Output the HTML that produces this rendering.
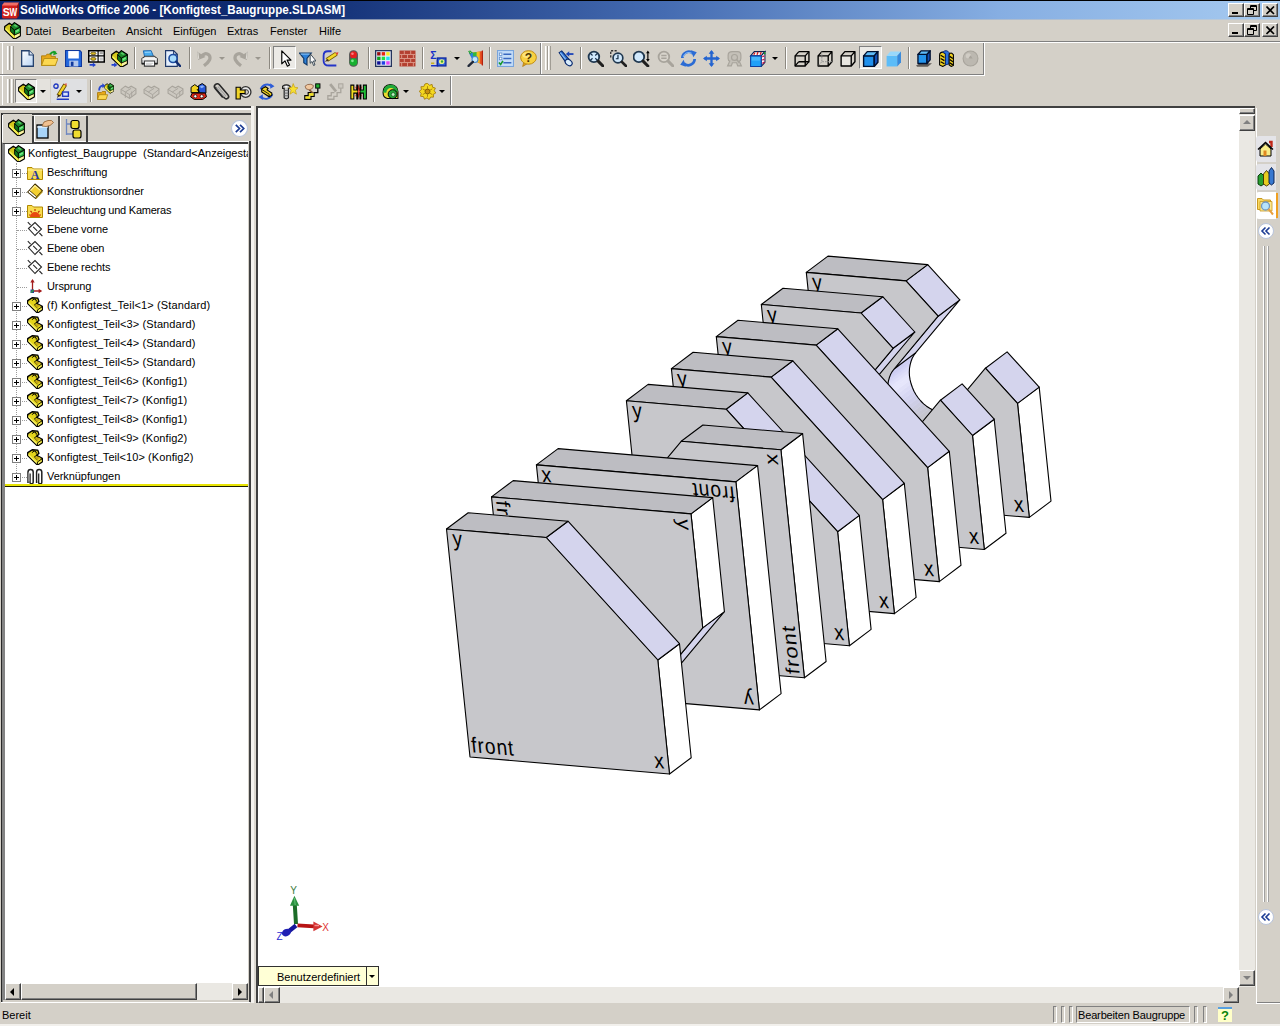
<!DOCTYPE html>
<html lang="de"><head><meta charset="utf-8"><title>SolidWorks Office 2006 - [Konfigtest_Baugruppe.SLDASM]</title>
<style>
html,body{margin:0;padding:0}
body{width:1280px;height:1026px;overflow:hidden;background:#d4d0c8;position:relative;font-family:"Liberation Sans",sans-serif;font-size:11px;color:#000}
.a{position:absolute}
.t{position:absolute;white-space:nowrap;line-height:14px;height:14px}
#title{left:0;top:0;width:1280px;height:19px;background:linear-gradient(90deg,#0a246a 0%,#0e2a70 22%,#456cb2 52%,#86aee2 78%,#a6caf0 100%)}
#title .cap{left:20px;top:2px;color:#fff;font-weight:bold;font-size:12.5px;line-height:16px;height:16px;transform:scaleX(.931);transform-origin:0 0}
.wb{position:absolute;box-sizing:border-box;width:16px;height:14px;background:#d4d0c8;border:1px solid;border-color:#fff #404040 #404040 #fff;box-shadow:inset -1px -1px 0 #808080}
.sep{position:absolute;width:1px;height:22px;background:#8c8880;box-shadow:1px 0 0 #fff}
.grip{position:absolute;width:1px;height:24px;background:#fff;box-shadow:1px 0 0 #e4e2dc,2px 0 0 #a09c94}
.dd{position:absolute;width:0;height:0;border:3px solid transparent;border-top:3px solid #000;border-bottom:0}
.ddg{border-top-color:#9a968e}
.ic{position:absolute;width:18px;height:18px;overflow:visible}
.row{position:absolute;left:0;width:250px;height:19px}
.pm{position:absolute;left:12px;top:5px;width:7px;height:7px;border:1px solid #808080;background:#fff}
.pm:before{content:"";position:absolute;left:1px;top:3px;width:5px;height:1px;background:#000}
.pm:after{content:"";position:absolute;left:3px;top:1px;width:1px;height:5px;background:#000}
.dh{position:absolute;height:1px;border-top:1px dotted #9c9c9c}
.dv{position:absolute;width:1px;border-left:1px dotted #9c9c9c}
.sb{position:absolute;background:#d4d0c8;border:1px solid;border-color:#fff #404040 #404040 #fff;box-shadow:inset -1px -1px 0 #808080;box-sizing:border-box}
.trk{position:absolute;background:#eae8e3}
.lb text{font-family:"Liberation Sans",sans-serif;fill:#000;stroke:none}
</style></head><body>
<!-- title bar -->
<div id="title" class="a"><div class="a" style="left:0;top:0;width:1280px;height:1px;background:#000"></div>
<svg class="a" style="left:2px;top:2px" width="17" height="17" viewBox="0 0 17 17"><rect x="0" y="2" width="15.5" height="14.5" rx="1.5" fill="#d0201c"/><path d="M0 3.5L2 .5H17L15.5 3.5Z" fill="#f07068"/><path d="M15.5 3L17 .5V13.5L15.5 16.5Z" fill="#98120e"/><text x=".8" y="13.6" font-family="Liberation Sans,sans-serif" font-weight="bold" font-size="10.5" fill="#fff">S</text><text x="7.6" y="13.6" font-family="Liberation Sans,sans-serif" font-weight="bold" font-size="10.5" fill="#fff" textLength="7.6" lengthAdjust="spacingAndGlyphs">W</text></svg>
<div class="t cap">SolidWorks Office 2006 - [Konfigtest_Baugruppe.SLDASM]</div>
<div class="wb" style="left:1228px;top:3px"><div class="a" style="left:3px;top:8px;width:6px;height:2px;background:#000"></div></div>
<div class="wb" style="left:1244px;top:3px"><svg class="a" style="left:2px;top:1px" width="10" height="10"><path d="M3.5 3.5V.5H9.5V5.5H6.5M.5 3.5H6.5V9.5H.5Z M.5 4.5H6.5 M3.5 1.5H9.5" stroke="#000" fill="none"/></svg></div>
<div class="wb" style="left:1262px;top:3px"><svg class="a" style="left:3px;top:2px" width="9" height="9"><path d="M.5 .5L8 8M8 .5L.5 8" stroke="#000" stroke-width="1.6" fill="none"/></svg></div>
</div>
<!-- menu bar -->
<div class="a" style="left:0;top:19px;width:1280px;height:1px;background:linear-gradient(90deg,#6f7a99,#bdcddc)"></div>
<div class="a" style="left:0;top:41px;width:1280px;height:1px;background:#808080"></div>
<div class="a" style="left:0;top:42px;width:1280px;height:1px;background:#fff"></div>
<div class="t" style="left:25.5px;top:24px">Datei</div>
<div class="t" style="left:62px;top:24px">Bearbeiten</div>
<div class="t" style="left:126px;top:24px">Ansicht</div>
<div class="t" style="left:173px;top:24px">Einfügen</div>
<div class="t" style="left:227px;top:24px">Extras</div>
<div class="t" style="left:270px;top:24px">Fenster</div>
<div class="t" style="left:319px;top:24px">Hilfe</div>
<div class="wb" style="left:1228px;top:23px"><div class="a" style="left:3px;top:8px;width:6px;height:2px;background:#000"></div></div>
<div class="wb" style="left:1244px;top:23px"><svg class="a" style="left:2px;top:1px" width="10" height="10"><path d="M3.5 3.5V.5H9.5V5.5H6.5M.5 3.5H6.5V9.5H.5Z M.5 4.5H6.5 M3.5 1.5H9.5" stroke="#000" fill="none"/></svg></div>
<div class="wb" style="left:1262px;top:23px"><svg class="a" style="left:3px;top:2px" width="9" height="9"><path d="M.5 .5L8 8M8 .5L.5 8" stroke="#000" stroke-width="1.6" fill="none"/></svg></div>
<!-- toolbar row frames -->
<div class="a" style="left:2px;top:43px;width:1px;height:31px;background:#fff"></div>
<div class="a" style="left:0;top:74px;width:984px;height:1px;background:#808080"></div>
<div class="a" style="left:0;top:75px;width:984px;height:1px;background:#fff"></div>
<div class="a" style="left:540px;top:43px;width:1px;height:31px;background:#808080"></div>
<div class="a" style="left:541px;top:43px;width:1px;height:31px;background:#fff"></div>
<div class="a" style="left:983px;top:43px;width:1px;height:32px;background:#808080"></div>
<div class="a" style="left:984px;top:43px;width:1px;height:33px;background:#fff"></div>
<div class="a" style="left:2px;top:76px;width:1px;height:29px;background:#fff"></div>
<div class="a" style="left:450px;top:76px;width:1px;height:29px;background:#808080"></div>
<div class="a" style="left:451px;top:76px;width:1px;height:29px;background:#fff"></div>
<div class="grip" style="left:7px;top:46px"></div><div class="grip" style="left:11px;top:46px"></div>
<div class="grip" style="left:545px;top:46px"></div><div class="grip" style="left:548px;top:46px"></div>
<div class="grip" style="left:7px;top:79px"></div><div class="grip" style="left:11px;top:79px"></div>
<!-- separators row 1 -->
<div class="sep" style="left:134px;top:47px"></div>
<div class="sep" style="left:189px;top:47px"></div>
<div class="sep" style="left:269px;top:47px"></div>
<div class="sep" style="left:368px;top:47px"></div>
<div class="sep" style="left:422px;top:47px"></div>
<div class="sep" style="left:489px;top:47px"></div>
<div class="sep" style="left:580px;top:47px"></div>
<div class="sep" style="left:785px;top:47px"></div>
<div class="sep" style="left:908px;top:47px"></div>
<!-- separators row 2 -->
<div class="sep" style="left:90px;top:80px"></div>
<div class="sep" style="left:373px;top:80px"></div>
<!-- pressed buttons -->
<div class="a" style="left:273px;top:46px;width:23px;height:23px;box-sizing:border-box;background:#eceae6;border:1px solid;border-color:#808080 #fff #fff #808080"></div>
<div class="a" style="left:859px;top:46px;width:23px;height:23px;box-sizing:border-box;background:#eceae6;border:1px solid;border-color:#808080 #fff #fff #808080"></div>
<div class="a" style="left:15px;top:79px;width:22px;height:24px;box-sizing:border-box;background:#eceae6;border:1px solid;border-color:#808080 #fff #fff #808080"></div>
<div class="a" style="left:37px;top:79px;width:13px;height:24px;box-sizing:border-box;background:#e4e2dd"></div>
<div class="a" style="left:51px;top:79px;width:36px;height:24px;box-sizing:border-box;background:#dfe0e2"></div>
<!-- dropdown arrows -->
<div class="dd ddg" style="left:219px;top:57px"></div>
<div class="dd ddg" style="left:255px;top:57px"></div>
<div class="dd" style="left:454px;top:57px"></div>
<div class="dd" style="left:772px;top:57px"></div>
<div class="dd" style="left:40px;top:90px"></div>
<div class="dd" style="left:76px;top:90px"></div>
<div class="dd" style="left:403px;top:90px"></div>
<div class="dd" style="left:439px;top:90px"></div>
<!-- toolbar icons -->
<svg class="a" style="left:18.5px;top:49.5px" width="17" height="17" viewBox="0 0 16 16"><defs><linearGradient id="pg" x1="0" y1="0" x2="1" y2="1"><stop offset="0" stop-color="#fff"/><stop offset="1" stop-color="#b8d4f4"/></linearGradient></defs><path d="M2.5 .7H9.5L13.5 4.7V15.3H2.5Z" fill="url(#pg)" stroke="#24406c" stroke-width="1.2"/><path d="M9.5 .7V4.7H13.5" fill="#dce8f8" stroke="#24406c" stroke-width="1.1"/></svg>
<svg class="a" style="left:40.5px;top:49.5px" width="17" height="17" viewBox="0 0 16 16"><path d="M.5 5.5H4.5L5.5 4H9.5V6H13.5V14.5H.5Z" fill="#e8a818" stroke="#a87808" stroke-width=".8"/><path d="M.5 14.5L3 8H16L13.5 14.5Z" fill="#fcd850" stroke="#b08810" stroke-width=".8"/><path d="M8.5 4Q11 .5 14 2.5" stroke="#18a028" stroke-width="1.8" fill="none"/><path d="M12 .5L15.5 3.5L11.5 5Z" fill="#18a028"/></svg>
<svg class="a" style="left:64.5px;top:49.5px" width="17" height="17" viewBox="0 0 16 16"><path d="M.5 .5H14L15.5 2V15.5H.5Z" fill="#2468dc" stroke="#10389c"/><rect x="3" y="1" width="10" height="7" fill="#fff"/><rect x="4" y="10" width="8.5" height="5.5" fill="#b4c8ec"/><rect x="5.5" y="11" width="2.5" height="4" fill="#10389c"/></svg>
<svg class="a" style="left:87.5px;top:49.5px" width="17" height="17" viewBox="0 0 16 16"><rect x=".7" y=".7" width="14.6" height="10.6" fill="#fff" stroke="#000" stroke-width="1.4"/><path d="M9.5 .7V11.3M9.5 5.5H15.3M.7 5.5H9.5" stroke="#000" stroke-width="1.1"/><ellipse cx="5" cy="3.2" rx="2.6" ry="1.2" fill="#d8b820" stroke="#403000" stroke-width=".6"/><ellipse cx="5" cy="8.4" rx="2.6" ry="1.4" fill="#d8b820" stroke="#403000" stroke-width=".6"/><rect x="11" y="2" width="3" height="2" fill="#a0a0a0"/><rect x="11" y="7" width="3" height="3" fill="#c8c8c8"/><path d="M1.5 14H5.5" stroke="#2040d0" stroke-width="1.6"/><path d="M4.5 11.8L7.5 14L4.5 16.2Z" fill="#2040d0"/></svg>
<svg class="a" style="left:110.5px;top:49.5px" width="17" height="17" viewBox="0 0 16 16"><path d="M.7 4.2L5 1.2L7.6 2.8L9.8 .7L15.3 4.4V13L9.8 16.2L.7 7.6Z" fill="#d4c81c" stroke="#000" stroke-width="1.3" stroke-linejoin="round"/><path d="M1.2 5.2L9.3 12.8V15.4L1.2 7.4Z" fill="#f6f258"/><path d="M10.3 12.4L14.8 10V12.8L10.3 15.4Z" fill="#faf4a4"/><path d="M6.2 4.3L9.8 7.5V12.3L6.2 8.9Z" fill="#0c741c" stroke="#000" stroke-width=".8"/><path d="M9.8 7.5L15.3 4.8V9.8L9.8 12.3Z" fill="#2cbc44" stroke="#000" stroke-width=".8"/><path d="M6.2 4.3L9.8 .9L15.3 4.6L9.8 7.5Z" fill="#1c8c2c" stroke="#000" stroke-width=".8"/><path d="M11 8.3L14 6.8V8.3L11 9.8Z" fill="#7ce88c"/><path d="M9 3.2L10.5 2.2L13 3.8L11.5 4.8Z" fill="#58c868"/><path d="M.5 14H4" stroke="#2040d0" stroke-width="1.6"/><path d="M3 11.8L6 14L3 16.2Z" fill="#2040d0"/></svg>
<svg class="a" style="left:140.5px;top:49.5px" width="17" height="17" viewBox="0 0 16 16"><path d="M3.5 6.8L2.2 .8L9.5 .6L12 6.5Z" fill="#48acf0" stroke="#1c68b0" stroke-width=".9"/><path d="M3.5 2.2L9.5 2" stroke="#a0d8fc" stroke-width=".9"/><path d="M.8 8.2L3.8 5.8H12.6L15.4 8.2V12.8H.8Z" fill="#e4e4e4" stroke="#383838" stroke-width="1"/><path d="M1.2 8.4H15" stroke="#fff" stroke-width="1"/><path d="M3.2 10.4H12.8V15.2H3.2Z" fill="#fff" stroke="#383838" stroke-width="1"/><path d="M.8 12.8H3.2M12.8 12.8H15.4" stroke="#202020" stroke-width="1.8"/><path d="M4.5 12.5H11.5M4.5 13.8H10" stroke="#b0b0b0" stroke-width=".6"/></svg>
<svg class="a" style="left:163.5px;top:49.5px" width="17" height="17" viewBox="0 0 16 16"><path d="M1.5 .6H9L12.5 4V15.4H1.5Z" fill="#e4eefc" stroke="#203868" stroke-width="1.1"/><path d="M9 .6V4H12.5" fill="none" stroke="#203868" stroke-width=".9"/><circle cx="8.5" cy="8" r="3.8" fill="#a8dcfc" stroke="#1c4ca0" stroke-width="1.5"/><path d="M11.5 11L15.5 15.5" stroke="#102c70" stroke-width="2.2" stroke-linecap="round"/></svg>
<svg class="a" style="left:195.5px;top:49.5px" width="17" height="17" viewBox="0 0 16 16"><path d="M1 1.5L2 9.5L9 6.5Z" fill="#a8a49c"/><path d="M4.5 6.5Q8.5 1.5 12.2 4.8Q15.5 9 7.5 14.8" fill="none" stroke="#a8a49c" stroke-width="3.1"/><path d="M1.8 2.2L2.6 8.6" stroke="#e8e6e0" stroke-width=".8"/></svg>
<svg class="a" style="left:231.5px;top:49.5px" width="17" height="17" viewBox="0 0 16 16"><path d="M15 1.5L14 9.5L7 6.5Z" fill="#a8a49c"/><path d="M11.5 6.5Q7.5 1.5 3.8 4.8Q.5 9 8.5 14.8" fill="none" stroke="#a8a49c" stroke-width="3.1"/><path d="M14.2 2.2L13.4 8.6" stroke="#e8e6e0" stroke-width=".8"/></svg>
<svg class="a" style="left:276.5px;top:49.5px" width="17" height="17" viewBox="0 0 16 16"><path d="M4.5 .8V13L7.5 10.2L9.8 15.2L11.8 14.2L9.5 9.5H13.2Z" fill="#fff" stroke="#000" stroke-width="1.1" stroke-linejoin="round"/></svg>
<svg class="a" style="left:298.5px;top:49.5px" width="17" height="17" viewBox="0 0 16 16"><path d="M.5 3H11.5L7.5 8V14L4.5 12V8Z" fill="#2c80d8" stroke="#103868" stroke-width="1.1"/><path d="M1.5 3.8H10.5" stroke="#90c8f8"/><path d="M10.5 3.5V12.5L12.3 10.8L13.7 14.6L15 14L13.6 10.3H16Z" fill="#fff" stroke="#203040" stroke-width=".8"/></svg>
<svg class="a" style="left:321.5px;top:49.5px" width="17" height="17" viewBox="0 0 16 16"><path d="M9 1.2H5.5Q1.5 1.2 1.5 5.5V10Q1.5 14.6 6.5 14.6H13.5" stroke="#2434c8" stroke-width="1.7" fill="none"/><path d="M4.5 9.5L13.5 3.5" stroke="#705800" stroke-width="4"/><path d="M4.8 9.3L13.2 3.7" stroke="#f4d828" stroke-width="2.4"/><path d="M12.5 2.5L15.5 2L14.5 5Z" fill="#e04030"/><path d="M2.5 11L5.5 8.2L6.5 10Z" fill="#403020"/></svg>
<svg class="a" style="left:344.5px;top:49.5px" width="17" height="17" viewBox="0 0 16 16"><rect x="3.8" y=".3" width="8.4" height="15.4" rx="4" fill="#585858"/><circle cx="8" cy="4.5" r="3.3" fill="#e42020"/><circle cx="7" cy="3.5" r="1.2" fill="#f88080"/><circle cx="8" cy="11.3" r="3.6" fill="#18b030"/><circle cx="7" cy="10.2" r="1.3" fill="#80e890"/></svg>
<svg class="a" style="left:374.5px;top:49.5px" width="17" height="17" viewBox="0 0 16 16"><rect x=".6" y=".6" width="14.8" height="14.8" fill="#e8ecf8" stroke="#24345c" stroke-width="1.2"/><rect x="2" y="2" width="3.2" height="3.2" fill="#981010"/><rect x="6.3" y="2" width="3.2" height="3.2" fill="#e82810"/><rect x="10.6" y="2" width="3.2" height="3.2" fill="#f8f020"/><rect x="2" y="6.3" width="3.2" height="3.2" fill="#10a020"/><rect x="6.3" y="6.3" width="3.2" height="3.2" fill="#20e040"/><rect x="10.6" y="6.3" width="3.2" height="3.2" fill="#20e0f0"/><rect x="2" y="10.6" width="3.2" height="3.2" fill="#101094"/><rect x="6.3" y="10.6" width="3.2" height="3.2" fill="#2040e4"/><rect x="10.6" y="10.6" width="3.2" height="3.2" fill="#e444f4"/></svg>
<svg class="a" style="left:398.5px;top:49.5px" width="17" height="17" viewBox="0 0 16 16"><rect x=".5" y=".5" width="15" height="15" fill="#b44030"/><path d="M.5 4.2H15.5M.5 8H15.5M.5 11.8H15.5M5 .5V4.2M11 .5V4.2M8 4.2V8M2.5 4.2V8M13.5 4.2V8M5 8V11.8M11 8V11.8M8 11.8V15.5M2.5 11.8V15.5M13.5 11.8V15.5" stroke="#dc9888" stroke-width=".9"/></svg>
<svg class="a" style="left:429.5px;top:49.5px" width="17" height="17" viewBox="0 0 16 16"><text x=".2" y="8" font-family="Liberation Sans,sans-serif" font-weight="bold" font-size="10" fill="#1830c8">Σ</text><path d="M1 14.8H7V9" stroke="#1830c8" stroke-width="1.5" fill="none"/><rect x="7" y="7.5" width="8" height="7.5" fill="#3060d8" stroke="#1028a0" stroke-width="1.2"/><ellipse cx="11" cy="11" rx="2.6" ry="2.2" fill="#e8f088"/><circle cx="11.3" cy="10.8" r="1.1" fill="#38a838"/><path d="M1 12.5H4" stroke="#c8b020" stroke-width="1.5"/></svg>
<svg class="a" style="left:466.5px;top:49.5px" width="17" height="17" viewBox="0 0 16 16"><path d="M2 3L14.5 1V14L9 11Z" fill="#e85020"/><path d="M2 3L12 1.3V12.5L8 10.5Z" fill="#f0c020"/><path d="M2 3L9 1.8V10.8L6.5 9Z" fill="#30b840"/><path d="M2 3L5.5 2.4V8.5L4 7Z" fill="#2880e0"/><path d="M14.5 .5V14.5" stroke="#b02010" stroke-width="1.1"/><path d="M1.5 1L3.5 4M2.5 .5L5 3" stroke="#20a030" stroke-width="1"/><circle cx="7.5" cy="9" r="2.8" fill="#c4e8fc" stroke="#4888c8" stroke-width="1"/><path d="M5.5 11.2L1.5 15" stroke="#202838" stroke-width="2.2" stroke-linecap="round"/></svg>
<svg class="a" style="left:496.5px;top:49.5px" width="17" height="17" viewBox="0 0 16 16"><rect x=".5" y=".5" width="15" height="15" fill="#c4dcf8" stroke="#78a4dc"/><path d="M6 4H13.5M6 8H13.5M6 12H13.5" stroke="#3868c0" stroke-width="1.3"/><rect x="2.2" y="2.8" width="2.4" height="2.4" fill="#fff" stroke="#5888c8" stroke-width=".7"/><rect x="2.2" y="6.8" width="2.4" height="2.4" fill="#fff" stroke="#5888c8" stroke-width=".7"/><path d="M1.8 11.8L3.4 13.6L5.6 10.2" stroke="#18982c" stroke-width="1.5" fill="none"/></svg>
<svg class="a" style="left:519.5px;top:49.5px" width="17" height="17" viewBox="0 0 16 16"><path d="M3.5 11.5L2.5 15.5L7 12.8Z" fill="#e0a020" stroke="#b07808" stroke-width=".7"/><ellipse cx="8" cy="7" rx="7.4" ry="6.4" fill="#f8d040" stroke="#c08c10" stroke-width=".9"/><ellipse cx="6.8" cy="4.8" rx="4.6" ry="2.8" fill="#fce888" opacity=".8"/><text x="8" y="11.2" text-anchor="middle" font-family="Liberation Sans,sans-serif" font-weight="bold" font-size="11.5" fill="#4c3400">?</text></svg>
<svg class="a" style="left:556.5px;top:49.5px" width="17" height="17" viewBox="0 0 16 16"><path d="M2 2.5L4.5 .8L12 9.5L8.5 12Z" fill="#2c6cd0" stroke="#0c2c70" stroke-width="1"/><path d="M3 2.5L9.5 10.5" stroke="#88bcf4" stroke-width="1.2"/><ellipse cx="11" cy="11.8" rx="3.6" ry="2.6" transform="rotate(40 11 11.8)" fill="#d8ecfc" stroke="#0c2c70" stroke-width="1.1"/><path d="M15.5 3.8H10.5" stroke="#1c44b8" stroke-width="1.7"/><path d="M11.5 1.2L8.3 3.8L11.5 6.4Z" fill="#1c44b8"/></svg>
<svg class="a" style="left:586.5px;top:49.5px" width="17" height="17" viewBox="0 0 16 16"><circle cx="6.5" cy="6.5" r="5" fill="#d0e8fc" stroke="#203850" stroke-width="1.7"/><path d="M10.5 10.5L15 15" stroke="#202020" stroke-width="2.8" stroke-linecap="round"/><path d="M3.2 3.2L5.2 5.2M9.8 3.2L7.8 5.2M3.2 9.8L5.2 7.8M9.8 9.8L7.8 7.8" stroke="#18304c" stroke-width="1.1" fill="none"/></svg>
<svg class="a" style="left:609.5px;top:49.5px" width="17" height="17" viewBox="0 0 16 16"><path d="M.7 7V.7H7" stroke="#303030" stroke-width="1.2" fill="none" stroke-dasharray="2 1.3"/><g transform="translate(1.5 1.5) scale(.92)"><circle cx="6.5" cy="6.5" r="5" fill="#d0e8fc" stroke="#203850" stroke-width="1.7"/><path d="M10.5 10.5L15 15" stroke="#202020" stroke-width="2.8" stroke-linecap="round"/></g><path d="M7.5 4.5V8.2H5.5" stroke="#102840" stroke-width="1.1" fill="none"/></svg>
<svg class="a" style="left:632.5px;top:49.5px" width="17" height="17" viewBox="0 0 16 16"><g transform="translate(-1 0)"><circle cx="6.5" cy="6.5" r="5" fill="#d0e8fc" stroke="#203850" stroke-width="1.7"/><path d="M10.5 10.5L15 15" stroke="#202020" stroke-width="2.8" stroke-linecap="round"/></g><path d="M14 2V9.5" stroke="#000" stroke-width="1.1"/><path d="M12.3 3L14 .5L15.7 3ZM12.3 8.5L14 11L15.7 8.5Z" fill="#000"/></svg>
<svg class="a" style="left:656.5px;top:49.5px" width="17" height="17" viewBox="0 0 16 16"><circle cx="6.5" cy="6.5" r="5" fill="#d8d4cc" stroke="#a8a49c" stroke-width="1.7"/><path d="M10.5 10.5L15 15" stroke="#a8a49c" stroke-width="2.8" stroke-linecap="round"/><path d="M4 5.2H9M4 7.8H9" stroke="#a8a49c" stroke-width="1.3"/></svg>
<svg class="a" style="left:679.5px;top:49.5px" width="17" height="17" viewBox="0 0 16 16"><path d="M2.2 7.5A6 6 0 0 1 12.5 3.5" fill="none" stroke="#2c6cd4" stroke-width="2.6"/><path d="M10.5 .3L15.8 2.2L12.5 6.8Z" fill="#2c6cd4"/><path d="M13.8 8.5A6 6 0 0 1 3.5 12.5" fill="none" stroke="#2c6cd4" stroke-width="2.6"/><path d="M5.5 15.7L.2 13.8L3.5 9.2Z" fill="#2c6cd4"/><path d="M3 6.5A5.5 5.5 0 0 1 11 3" fill="none" stroke="#8cc0f8" stroke-width=".9"/></svg>
<svg class="a" style="left:702.5px;top:49.5px" width="17" height="17" viewBox="0 0 16 16"><path d="M8 1.5V14.5M1.5 8H14.5" stroke="#2464d0" stroke-width="2.2"/><path d="M5.3 3.6L8 0L10.7 3.6ZM5.3 12.4L8 16L10.7 12.4ZM3.6 5.3L0 8L3.6 10.7ZM12.4 5.3L16 8L12.4 10.7Z" fill="#2464d0"/></svg>
<svg class="a" style="left:725.5px;top:49.5px" width="17" height="17" viewBox="0 0 16 16"><path d="M2 5Q2 1.5 6 1.5H11Q14 1.5 14 5V8Q14 10 12.5 10.5L14.5 15H11L10 12H6L5 15H1.5L3.5 10.5Q2 10 2 8Z" fill="#c4c0b8" stroke="#a8a49c" stroke-width="1.1"/><circle cx="8" cy="7" r="2.8" fill="none" stroke="#a8a49c" stroke-width="1.1"/><path d="M10 9L12.5 12" stroke="#a8a49c" stroke-width="1.3"/></svg>
<svg class="a" style="left:748.5px;top:49.5px" width="17" height="17" viewBox="0 0 16 16"><path d="M1.5 5.5L5 1.5H15L11.5 5.5Z" fill="#fff" stroke="#102050" stroke-width="1"/><path d="M11.5 5.5L15 1.5V11.5L11.5 15.5Z" fill="#fff" stroke="#102050" stroke-width="1"/><path d="M5.5 2.5L4.5 4.5M8.5 2L7.5 4.5M11.5 2L10.5 4.5" stroke="#d82020" stroke-width="1.3"/><path d="M12.5 6.5L14.5 5.5M12.5 9.5L14.5 8.5M12.5 12.5L14.5 11.5" stroke="#d02050" stroke-width="1.3"/><path d="M14.5 2L15 4" stroke="#18a028" stroke-width="1.3"/><path d="M1.5 5.5H11.5V15.5H1.5Z" fill="#20a0f8" stroke="#1040a0" stroke-width="1"/><path d="M2.5 6.5H10.5V10H2.5Z" fill="#58c0fc" opacity=".7"/></svg>
<svg class="a" style="left:792.5px;top:49.5px" width="17" height="17" viewBox="0 0 16 16"><path d="M2 5.5H11.5V15H2Z M5.5 1.5H15V11H5.5" fill="none" stroke="#000" stroke-width="1.3" stroke-linejoin="round"/><path d="M2 5.5L5.5 1.5M11.5 5.5L15 1.5M11.5 15L15 11M2 15L5.5 11" stroke="#000" stroke-width="1.2"/></svg>
<svg class="a" style="left:815.5px;top:49.5px" width="17" height="17" viewBox="0 0 16 16"><path d="M2 5.5H11.5V15H2Z" fill="none" stroke="#000" stroke-width="1.3" stroke-linejoin="round"/><path d="M2 5.5L5.5 1.5H15V11L11.5 15M11.5 5.5L15 1.5" fill="none" stroke="#000" stroke-width="1.3" stroke-linejoin="round"/><path d="M5.5 1.5V11H15M5.5 11L2 15" stroke="#909090" stroke-width=".9" stroke-dasharray="1.5 1" fill="none"/></svg>
<svg class="a" style="left:838.5px;top:49.5px" width="17" height="17" viewBox="0 0 16 16"><path d="M2 5.5H11.5V15H2Z" fill="#e8e6e0" stroke="#000" stroke-width="1.3" stroke-linejoin="round"/><path d="M2 5.5L5.5 1.5H15V11L11.5 15M11.5 5.5L15 1.5" fill="none" stroke="#000" stroke-width="1.3" stroke-linejoin="round"/></svg>
<svg class="a" style="left:861.5px;top:49.5px" width="17" height="17" viewBox="0 0 16 16"><path d="M1.5 5.5H11.5V15.5H1.5Z" fill="#2090ec" stroke="#001030" stroke-width="1.3" stroke-linejoin="round"/><path d="M1.5 5.5L5 1.5H15L11.5 5.5Z" fill="#60bcf8" stroke="#001030" stroke-width="1.3" stroke-linejoin="round"/><path d="M11.5 5.5L15 1.5V11.5L11.5 15.5Z" fill="#1450b4" stroke="#001030" stroke-width="1.3" stroke-linejoin="round"/></svg>
<svg class="a" style="left:884.5px;top:49.5px" width="17" height="17" viewBox="0 0 16 16"><path d="M1.5 5.5H11.5V15.5H1.5Z" fill="#5cbcf8"/><path d="M1.5 5.5L5 1.5H15L11.5 5.5Z" fill="#98d8fc"/><path d="M11.5 5.5L15 1.5V11.5L11.5 15.5Z" fill="#3488dc"/></svg>
<svg class="a" style="left:914.5px;top:49.5px" width="17" height="17" viewBox="0 0 16 16"><path d="M1 14.5L5 12.5H16L12 15.8H2Z" fill="#605c58"/><g transform="translate(1.5 -.5) scale(.85)"><path d="M1.5 5.5H11.5V15.5H1.5Z" fill="#2494ec" stroke="#001030" stroke-width="1.5" stroke-linejoin="round"/><path d="M1.5 5.5L5 1.5H15L11.5 5.5Z" fill="#60bcf8" stroke="#001030" stroke-width="1.5" stroke-linejoin="round"/><path d="M11.5 5.5L15 1.5V11.5L11.5 15.5Z" fill="#1450b4" stroke="#001030" stroke-width="1.5" stroke-linejoin="round"/></g></svg>
<svg class="a" style="left:937.5px;top:49.5px" width="17" height="17" viewBox="0 0 16 16"><path d="M1.5 5Q1.5 2 4.5 2L7 3.5V14L4.5 15.5L1.5 14Z" fill="#f0d020" stroke="#000" stroke-width="1"/><path d="M2.5 5L6 7M2.5 8L6 10M2.5 11L6 13" stroke="#000" stroke-width="1.2"/><path d="M4.5 2Q8 -1 10.5 2.5V13L7 14V3.5Z" fill="#2c70dc" stroke="#0c2870" stroke-width=".9"/><path d="M10.5 5Q10.5 2.5 13 3L14.5 4.5V14.5L12.5 15.5L10.5 14Z" fill="#f0d020" stroke="#000" stroke-width="1"/><path d="M11 6L14 8M11 9L14 11M11 12L14 14" stroke="#000" stroke-width="1.2"/></svg>
<svg class="a" style="left:961.5px;top:49.5px" width="17" height="17" viewBox="0 0 16 16"><circle cx="8" cy="8" r="7" fill="#bcb8b0" stroke="#a8a49c"/><circle cx="6" cy="5.5" r="2.5" fill="#d0ccc4"/><path d="M8 5L10 8H6Z" fill="#a8a49c"/></svg>
<svg class="a" style="left:17.5px;top:82.5px" width="17" height="17" viewBox="0 0 16 16"><path d="M.7 4.2L5 1.2L7.6 2.8L9.8 .7L15.3 4.4V13L9.8 16.2L.7 7.6Z" fill="#d4c81c" stroke="#000" stroke-width="1.3" stroke-linejoin="round"/><path d="M1.2 5.2L9.3 12.8V15.4L1.2 7.4Z" fill="#f6f258"/><path d="M10.3 12.4L14.8 10V12.8L10.3 15.4Z" fill="#faf4a4"/><path d="M6.2 4.3L9.8 7.5V12.3L6.2 8.9Z" fill="#0c741c" stroke="#000" stroke-width=".8"/><path d="M9.8 7.5L15.3 4.8V9.8L9.8 12.3Z" fill="#2cbc44" stroke="#000" stroke-width=".8"/><path d="M6.2 4.3L9.8 .9L15.3 4.6L9.8 7.5Z" fill="#1c8c2c" stroke="#000" stroke-width=".8"/><path d="M11 8.3L14 6.8V8.3L11 9.8Z" fill="#7ce88c"/><path d="M9 3.2L10.5 2.2L13 3.8L11.5 4.8Z" fill="#58c868"/></svg>
<svg class="a" style="left:52.5px;top:82.5px" width="17" height="17" viewBox="0 0 16 16"><circle cx="2.8" cy="3" r="2" fill="none" stroke="#2038c0" stroke-width="1.3"/><path d="M5 12L11.5 1.5" stroke="#604800" stroke-width="3.8"/><path d="M5.3 11.5L11.2 2" stroke="#f4d428" stroke-width="2.2"/><path d="M10.5 1L12.8 .3L12.8 2.8Z" fill="#e05040"/><path d="M3.8 14L5 10.5L6.8 11.8Z" fill="#302010"/><rect x="9" y="8.5" width="5.5" height="4" fill="#d8e4fc" stroke="#2038c0" stroke-width="1.3"/><path d="M3.5 15.3H15" stroke="#2038c0" stroke-width="1.4"/></svg>
<svg class="a" style="left:96.5px;top:82.5px" width="17" height="17" viewBox="0 0 16 16"><path d="M.5 9H4L5 8H8V15.5H.5Z" fill="#e8a818" stroke="#a87808" stroke-width=".8"/><path d="M.5 15.5L2 11H10L8.5 15.5Z" fill="#fcd850" stroke="#b08810" stroke-width=".8"/><g transform="translate(6.5 0) scale(.6)"><path d="M.7 4.2L5 1.2L7.6 2.8L9.8 .7L15.3 4.4V13L9.8 16.2L.7 7.6Z" fill="#d4c81c" stroke="#000" stroke-width="1.3" stroke-linejoin="round"/><path d="M1.2 5.2L9.3 12.8V15.4L1.2 7.4Z" fill="#f6f258"/><path d="M10.3 12.4L14.8 10V12.8L10.3 15.4Z" fill="#faf4a4"/><path d="M6.2 4.3L9.8 7.5V12.3L6.2 8.9Z" fill="#0c741c" stroke="#000" stroke-width=".8"/><path d="M9.8 7.5L15.3 4.8V9.8L9.8 12.3Z" fill="#2cbc44" stroke="#000" stroke-width=".8"/><path d="M6.2 4.3L9.8 .9L15.3 4.6L9.8 7.5Z" fill="#1c8c2c" stroke="#000" stroke-width=".8"/><path d="M11 8.3L14 6.8V8.3L11 9.8Z" fill="#7ce88c"/><path d="M9 3.2L10.5 2.2L13 3.8L11.5 4.8Z" fill="#58c868"/></g><path d="M2 7Q2 2.5 6 2.5" stroke="#2848d0" stroke-width="1.7" fill="none"/><path d="M5 .3L8 2.5L5 4.7Z" fill="#2848d0"/></svg>
<svg class="a" style="left:119.5px;top:82.5px" width="17" height="17" viewBox="0 0 16 16"><path d="M1 6L5 3L8 4.5L10.5 3L15 5.5V10L9 14.5L1 9.5Z" fill="#ccc8c0" stroke="#a8a49c" stroke-width="1"/><path d="M1 6L9 11V14.5M9 11L15 6M5 8.5L10.5 5" fill="none" stroke="#a8a49c" stroke-width=".9"/><path d="M5 9L5 14M11 8V13" stroke="#a8a49c" stroke-width=".9"/></svg>
<svg class="a" style="left:142.5px;top:82.5px" width="17" height="17" viewBox="0 0 16 16"><path d="M1 6L5 3L8 4.5L10.5 3L15 5.5V10L9 14.5L1 9.5Z" fill="#ccc8c0" stroke="#a8a49c" stroke-width="1"/><path d="M1 6L9 11V14.5M9 11L15 6M5 8.5L10.5 5" fill="none" stroke="#a8a49c" stroke-width=".9"/></svg>
<svg class="a" style="left:166.5px;top:82.5px" width="17" height="17" viewBox="0 0 16 16"><path d="M1 6L5 3L8 4.5L10.5 3L15 5.5V10L9 14.5L1 9.5Z" fill="#ccc8c0" stroke="#a8a49c" stroke-width="1"/><path d="M1 6L9 11V14.5M9 11L15 6M5 8.5L10.5 5" fill="none" stroke="#a8a49c" stroke-width=".9"/><path d="M12 7.5V12" stroke="#a8a49c" stroke-width=".9"/></svg>
<svg class="a" style="left:189.5px;top:82.5px" width="17" height="17" viewBox="0 0 16 16"><path d="M1 4L4.5 1.5L8 4V9L1 9Z" fill="#f0d020" stroke="#000" stroke-width=".9"/><path d="M8 2.5L11.5 .5L15 3V9.5L8 9Z" fill="#2858d8" stroke="#000" stroke-width=".9"/><path d="M9 3.5L11.5 2L13.5 3.5L11 5Z" fill="#88b0f8"/><path d="M2 9.5H14.5L15.5 13L12 15.5H4L.5 13Z" fill="#e02818" stroke="#000" stroke-width=".9"/><circle cx="5" cy="12.5" r="1.5" fill="#fff" stroke="#000" stroke-width=".6"/><circle cx="11" cy="12.5" r="1.5" fill="#fff" stroke="#000" stroke-width=".6"/><path d="M6.5 6L9 8" stroke="#000"/></svg>
<svg class="a" style="left:212.5px;top:82.5px" width="17" height="17" viewBox="0 0 16 16"><path d="M2.2 3.8L10.8 14A2.1 2.1 0 0 0 14.2 11.4L6.2 1.8A2.7 2.7 0 0 0 2 5.2L9.2 13.6" fill="none" stroke="#282828" stroke-width="1.5"/><path d="M4.6 3.4L12.4 12.6" stroke="#a0a0a0" stroke-width="1.1"/><path d="M3 4.2L10.4 13" stroke="#e8e8e8" stroke-width=".7"/></svg>
<svg class="a" style="left:234.5px;top:82.5px" width="17" height="17" viewBox="0 0 16 16"><circle cx="10" cy="8.5" r="5" fill="#e8e8e8" stroke="#303030" stroke-width="1.2"/><circle cx="10.5" cy="8.5" r="2.2" fill="#d4d0c8" stroke="#303030" stroke-width=".9"/><path d="M1 4H5V6.5H9.5V10H5V15H1Z" fill="#f0d428" stroke="#000" stroke-width="1"/></svg>
<svg class="a" style="left:257.5px;top:82.5px" width="17" height="17" viewBox="0 0 16 16"><path d="M2.5 6A6.5 6.5 0 0 1 13 3" fill="none" stroke="#2c5cd8" stroke-width="1.8"/><path d="M11.5 .3L15.5 3L11.5 5.5Z" fill="#2c5cd8"/><path d="M13.5 10.5A6.5 6.5 0 0 1 3 13.2" fill="none" stroke="#2c5cd8" stroke-width="1.8"/><path d="M4.5 16L.5 13.2L4.5 10.7Z" fill="#2c5cd8"/><path d="M3.5 5.5L7 3.5L9.5 5L8.5 6.5L13 9.5V11.5L10.5 13L3.5 8.5Z" fill="#f0d428" stroke="#000" stroke-width="1"/><path d="M3.5 6L10.5 10.5V13" fill="none" stroke="#000" stroke-width=".8"/></svg>
<svg class="a" style="left:280.5px;top:82.5px" width="17" height="17" viewBox="0 0 16 16"><path d="M1.5 3Q5 .5 8.5 3V5H7V14Q5 15.8 3 14V5H1.5Z" fill="#c8c8c8" stroke="#202020" stroke-width="1.1"/><path d="M3 7H7M3 9.5H7M3 12H7" stroke="#606060" stroke-width=".8"/><path d="M4 3.5H6" stroke="#fff" stroke-width="1.4"/><path d="M11.5 .5L12.8 4L16 4.5L13.5 6.8L14.5 10.5L11.5 8.5L8.5 10.5L9.5 6.8L7.5 4.5L10.3 4Z" fill="#f8e030" stroke="#c09810" stroke-width=".6"/></svg>
<svg class="a" style="left:303.5px;top:82.5px" width="17" height="17" viewBox="0 0 16 16"><path d="M1 3Q3 .8 6.5 1.2L9 2.5L8 5L5 6.5L2 5.5Z" fill="#f0c8a0" stroke="#805030" stroke-width=".7"/><path d="M5 6.5L8.5 9.5" stroke="#805030" stroke-width="1.4"/><rect x="11" y=".8" width="4" height="4" fill="#20b030" stroke="#000" stroke-width=".9"/><path d="M13 5V9H9.5V12.5H6.5V15.3H.8V12H4V9H7" fill="none" stroke="#000" stroke-width="1.2"/><path d="M1.3 12.6H6V14.8H1.3Z" fill="#f0e020"/><path d="M4.5 9.6H9V12H4.5Z" fill="#f0e020"/></svg>
<svg class="a" style="left:326.5px;top:82.5px" width="17" height="17" viewBox="0 0 16 16"><path d="M3 1L8.5 8" stroke="#a8a49c" stroke-width="2.6"/><rect x="11" y=".8" width="4" height="4" fill="#ccc8c0" stroke="#a8a49c" stroke-width=".9"/><path d="M13 5V9H9.5V12.5H6.5V15.3H.8V12H4V9H7" fill="none" stroke="#a8a49c" stroke-width="1.2"/></svg>
<svg class="a" style="left:349.5px;top:82.5px" width="17" height="17" viewBox="0 0 16 16"><path d="M8 1.5L9 5L11.5 3L10 6.5L13 8L10 9.5L11.5 13L9 11L8 14.5L7 11L4.5 13L6 9.5L3 8L6 6.5L4.5 3L7 5Z" fill="#f83828"/><path d="M.8 2H3.6V6.5H6.4V2H7.4V15H6.4V9.5H3.6V15H.8Z" fill="#f0dc20" stroke="#000" stroke-width="1"/><path d="M9.4 2H10.2V6.5H12.6V2H15.4V15H12.6V9.5H10.2V15H9.4Z" fill="#20c038" stroke="#000" stroke-width="1"/><path d="M8.3 5.5L8.6 7.2L9.8 7.6L8.6 8.4L8.3 10.5L7.8 8.4L6.8 7.8L7.8 7.2Z" fill="#ff6050"/></svg>
<svg class="a" style="left:381.5px;top:82.5px" width="17" height="17" viewBox="0 0 16 16"><path d="M1 9Q1 2 8 1.5Q14.5 2 15 8V14.5H5Q1 14 1 9Z" fill="#e8dc30" stroke="#000" stroke-width="1"/><path d="M2.5 9Q3 3.5 8.5 3Q13 3.5 13.5 8.5" fill="none" stroke="#20a838" stroke-width="3"/><circle cx="10" cy="10.5" r="4.2" fill="#20a838" stroke="#000" stroke-width=".9"/><circle cx="10.5" cy="10.8" r="1.8" fill="#b8f0c0" stroke="#105018" stroke-width=".7"/></svg>
<svg class="a" style="left:418.5px;top:82.5px" width="17" height="17" viewBox="0 0 16 16"><path d="M8 .3L9.8 2.2L12.3 1.3L12.8 4L15.4 4.8L14.3 7.2L15.8 9.4L13.5 10.6L13.6 13.3L11 13.2L9.6 15.6L7.5 14L5.2 15.3L4.2 12.8L1.5 12.5L2 9.8L.2 7.8L2.3 6.2L1.8 3.5L4.5 3.4L5.6 .9Z" fill="#f4d820" stroke="#a07808" stroke-width=".8"/><circle cx="8" cy="8" r="2.3" fill="#c89010" stroke="#705000" stroke-width=".8"/><path d="M8 3V5.5M3.5 5.5L6 7M3.5 11L6 9.2M8 13V10.5M12.5 11L10 9.2M12.5 5.5L10 7" stroke="#a07808" stroke-width=".8"/></svg>
<svg class="a" style="left:4px;top:22px" width="17" height="17" viewBox="0 0 16 16"><path d="M.7 4.2L5 1.2L7.6 2.8L9.8 .7L15.3 4.4V13L9.8 16.2L.7 7.6Z" fill="#d4c81c" stroke="#000" stroke-width="1.3" stroke-linejoin="round"/><path d="M1.2 5.2L9.3 12.8V15.4L1.2 7.4Z" fill="#f6f258"/><path d="M10.3 12.4L14.8 10V12.8L10.3 15.4Z" fill="#faf4a4"/><path d="M6.2 4.3L9.8 7.5V12.3L6.2 8.9Z" fill="#0c741c" stroke="#000" stroke-width=".8"/><path d="M9.8 7.5L15.3 4.8V9.8L9.8 12.3Z" fill="#2cbc44" stroke="#000" stroke-width=".8"/><path d="M6.2 4.3L9.8 .9L15.3 4.6L9.8 7.5Z" fill="#1c8c2c" stroke="#000" stroke-width=".8"/><path d="M11 8.3L14 6.8V8.3L11 9.8Z" fill="#7ce88c"/><path d="M9 3.2L10.5 2.2L13 3.8L11.5 4.8Z" fill="#58c868"/></svg>
<!-- viewport frame -->
<div class="a" style="left:0;top:106px;width:1255px;height:2px;background:#404040"></div>
<div class="a" style="left:0;top:108px;width:252px;height:2px;background:#fff"></div>
<div class="a" style="left:256px;top:106px;width:2px;height:897px;background:#404040"></div>
<div class="a" style="left:258px;top:108px;width:981px;height:879px;background:#fff"></div>
<div class="a" style="left:1255px;top:106px;width:25px;height:898px;background:#d4d0c8"></div>
<div class="a" style="left:1256px;top:108px;width:1px;height:895px;background:#fff"></div><div class="a" style="left:1257px;top:1002px;width:23px;height:1px;background:#808080"></div><div class="a" style="left:1256px;top:1003px;width:24px;height:1px;background:#fff"></div>
<!-- left panel -->
<div class="a" style="left:1px;top:113px;width:250px;height:2px;background:#404040"></div>
<div class="a" style="left:1px;top:113px;width:1px;height:889px;background:#282828"></div><div class="a" style="left:2px;top:115px;width:1px;height:27px;background:#fff"></div>
<div class="a" style="left:249px;top:141px;width:2px;height:861px;background:#404040"></div><div class="a" style="left:251px;top:106px;width:3px;height:897px;background:#f4f2ee"></div><div class="a" style="left:254px;top:106px;width:2px;height:897px;background:#dcd8d0"></div>
<div class="a" style="left:3px;top:143px;width:245px;height:840px;background:#fff"></div>
<div class="a" style="left:2px;top:143px;width:3px;height:859px;background:#848484"></div>
<div class="a" style="left:3px;top:141px;width:246px;height:1px;background:#fff"></div><div class="a" style="left:3px;top:142px;width:245px;height:1.5px;background:#404040"></div>
<!-- tabs -->
<div class="a" style="left:3px;top:114px;width:29px;height:29px;background:#d8d4cc"></div>
<div class="a" style="left:32px;top:116px;width:2px;height:26px;background:#404040"></div>
<div class="a" style="left:34px;top:116px;width:1px;height:26px;background:#fff"></div>
<div class="a" style="left:58px;top:116px;width:2px;height:26px;background:#404040"></div>
<div class="a" style="left:60px;top:116px;width:1px;height:26px;background:#fff"></div>
<div class="a" style="left:86px;top:116px;width:2px;height:26px;background:#404040"></div>
<div class="a" style="left:34px;top:115px;width:52px;height:1px;background:#fff"></div>
<!-- chevron button -->
<svg class="a" style="left:231px;top:120px" width="17" height="17" viewBox="0 0 16 16"><circle cx="8" cy="8" r="7.5" fill="#fff" stroke="#b8c4dc"/><path d="M4.5 4.5L8 8L4.5 11.5M8.5 4.5L12 8L8.5 11.5" fill="none" stroke="#1c3c94" stroke-width="1.6"/></svg>
<!-- yellow line -->
<div class="a" style="left:5px;top:484px;width:243px;height:2px;background:#e8e404"></div>
<div class="a" style="left:5px;top:486px;width:243px;height:1px;background:#202000"></div>
<!-- left hscroll -->
<div class="trk" style="left:5px;top:983px;width:243px;height:17px"></div>
<div class="sb" style="left:5px;top:983px;width:16px;height:17px"><div class="a" style="left:4px;top:4px;width:0;height:0;border:4px solid transparent;border-right:4px solid #000;border-left:0"></div></div>
<div class="sb" style="left:21px;top:983px;width:176px;height:17px"></div>
<div class="sb" style="left:232px;top:983px;width:16px;height:17px"><div class="a" style="left:5px;top:4px;width:0;height:0;border:4px solid transparent;border-left:4px solid #000;border-right:0"></div></div>
<div class="a" style="left:3px;top:1000px;width:246px;height:2px;background:#d4d0c8"></div>
<div class="a" style="left:1px;top:1002px;width:249px;height:1px;background:#fff"></div>
<!-- viewport scrollbars -->
<div class="trk" style="left:1239px;top:108px;width:16px;height:879px"></div>
<div class="sb" style="left:1239px;top:108px;width:16px;height:6px"></div>
<div class="sb" style="left:1239px;top:115px;width:16px;height:16px"><div class="a" style="left:3px;top:4px;width:0;height:0;border:4px solid transparent;border-bottom:4px solid #808080;border-top:0"></div></div>
<div class="sb" style="left:1239px;top:970px;width:16px;height:16px"><div class="a" style="left:3px;top:5px;width:0;height:0;border:4px solid transparent;border-top:4px solid #808080;border-bottom:0"></div></div>
<div class="trk" style="left:258px;top:987px;width:981px;height:16px"></div>
<div class="sb" style="left:258px;top:987px;width:6px;height:16px"></div>
<div class="sb" style="left:264px;top:987px;width:16px;height:16px"><div class="a" style="left:4px;top:3px;width:0;height:0;border:4px solid transparent;border-right:4px solid #808080;border-left:0"></div></div>
<div class="sb" style="left:1223px;top:987px;width:16px;height:16px"><div class="a" style="left:5px;top:3px;width:0;height:0;border:4px solid transparent;border-left:4px solid #808080;border-right:0"></div></div>
<div class="a" style="left:1239px;top:987px;width:17px;height:17px;background:#d4d0c8"></div>
<!-- view label -->
<div class="a" style="left:258px;top:966px;width:121px;height:20px;background:#ffffd6;border:1px solid #303030;box-sizing:border-box"></div>
<div class="a" style="left:366px;top:967px;width:1px;height:18px;background:#303030"></div>
<div class="t" style="left:277px;top:970px">Benutzerdefiniert</div>
<div class="dd" style="left:369px;top:975px"></div>
<!-- status bar -->
<div class="a" style="left:0;top:1004px;width:1280px;height:22px;background:#d4d0c8"></div>
<div class="t" style="left:2px;top:1008px">Bereit</div>
<div class="a" style="left:1076px;top:1006px;width:114px;height:17px;box-sizing:border-box;border:1px solid;border-color:#808080 #fff #fff #808080"></div>
<div class="t" style="left:1078px;top:1008px;letter-spacing:-0.15px">Bearbeiten Baugruppe</div>
<div class="a" style="left:1053px;top:1006px;width:4px;height:17px;box-sizing:border-box;border:1px solid;border-color:#808080 #fff #fff #808080"></div>
<div class="a" style="left:1061px;top:1006px;width:4px;height:17px;box-sizing:border-box;border:1px solid;border-color:#808080 #fff #fff #808080"></div>
<div class="a" style="left:1069px;top:1006px;width:4px;height:17px;box-sizing:border-box;border:1px solid;border-color:#808080 #fff #fff #808080"></div>
<div class="a" style="left:1194px;top:1006px;width:4px;height:17px;box-sizing:border-box;border:1px solid;border-color:#808080 #fff #fff #808080"></div>
<div class="a" style="left:1203px;top:1006px;width:4px;height:17px;box-sizing:border-box;border:1px solid;border-color:#808080 #fff #fff #808080"></div>
<svg class="a" style="left:1218px;top:1007px" width="14" height="15" viewBox="0 0 14 15"><rect x="0" y="0" width="14" height="15" fill="#ffffc8"/><rect x="0" y="0" width="14" height="2" fill="#58a0e0"/><text x="7" y="13" text-anchor="middle" font-family="Liberation Sans,sans-serif" font-weight="bold" font-size="13" fill="#088408">?</text></svg>
<div class="a" style="left:0;top:1024px;width:1280px;height:2px;background:#f2f0ec"></div>
<svg class="a" style="left:8px;top:119px" width="17" height="17" viewBox="0 0 16 16"><path d="M.7 4.2L5 1.2L7.6 2.8L9.8 .7L15.3 4.4V13L9.8 16.2L.7 7.6Z" fill="#d4c81c" stroke="#000" stroke-width="1.3" stroke-linejoin="round"/><path d="M1.2 5.2L9.3 12.8V15.4L1.2 7.4Z" fill="#f6f258"/><path d="M10.3 12.4L14.8 10V12.8L10.3 15.4Z" fill="#faf4a4"/><path d="M6.2 4.3L9.8 7.5V12.3L6.2 8.9Z" fill="#0c741c" stroke="#000" stroke-width=".8"/><path d="M9.8 7.5L15.3 4.8V9.8L9.8 12.3Z" fill="#2cbc44" stroke="#000" stroke-width=".8"/><path d="M6.2 4.3L9.8 .9L15.3 4.6L9.8 7.5Z" fill="#1c8c2c" stroke="#000" stroke-width=".8"/><path d="M11 8.3L14 6.8V8.3L11 9.8Z" fill="#7ce88c"/><path d="M9 3.2L10.5 2.2L13 3.8L11.5 4.8Z" fill="#58c868"/></svg>
<svg class="a" style="left:36px;top:118px" width="20" height="22" viewBox="0 0 20 22"><rect x="1" y="7" width="11" height="13" fill="#a8d4f8" stroke="#000" stroke-width="1.3"/><path d="M1 9H12" stroke="#fff" stroke-width="1"/><path d="M6 8L8 4L12 2.5H15.5L17.5 4.5L14 7.5L10 8.5Z" fill="#f0c090" stroke="#906030" stroke-width=".8"/></svg>
<svg class="a" style="left:63px;top:118px" width="22" height="22" viewBox="0 0 22 22"><path d="M3.5 1V17M3.5 6H8M3.5 16H10" stroke="#7088c0" stroke-width="1.3" fill="none"/><rect x="8" y="2.5" width="8" height="8" rx="2" fill="#f0dc30" stroke="#000" stroke-width="1.2"/><rect x="10" y="12" width="8" height="8" rx="2" fill="#f0dc30" stroke="#000" stroke-width="1.2"/></svg>
<!-- feature tree -->
<div class="dv" style="left:16px;top:163px;height:316px"></div>
<svg class="a" style="left:8px;top:145px" width="17" height="17" viewBox="0 0 16 16"><path d="M.7 4.2L5 1.2L7.6 2.8L9.8 .7L15.3 4.4V13L9.8 16.2L.7 7.6Z" fill="#d4c81c" stroke="#000" stroke-width="1.3" stroke-linejoin="round"/><path d="M1.2 5.2L9.3 12.8V15.4L1.2 7.4Z" fill="#f6f258"/><path d="M10.3 12.4L14.8 10V12.8L10.3 15.4Z" fill="#faf4a4"/><path d="M6.2 4.3L9.8 7.5V12.3L6.2 8.9Z" fill="#0c741c" stroke="#000" stroke-width=".8"/><path d="M9.8 7.5L15.3 4.8V9.8L9.8 12.3Z" fill="#2cbc44" stroke="#000" stroke-width=".8"/><path d="M6.2 4.3L9.8 .9L15.3 4.6L9.8 7.5Z" fill="#1c8c2c" stroke="#000" stroke-width=".8"/><path d="M11 8.3L14 6.8V8.3L11 9.8Z" fill="#7ce88c"/><path d="M9 3.2L10.5 2.2L13 3.8L11.5 4.8Z" fill="#58c868"/></svg>
<div class="t" style="left:28px;top:146px;width:220px;overflow:hidden">Konfigtest_Baugruppe&nbsp; (Standard&lt;Anzeigesta</div>
<div class="dh" style="left:17px;top:173px;width:10px"></div>
<div class="pm" style="top:169px"></div>
<svg class="a" style="left:27px;top:164px" width="16" height="16" viewBox="0 0 16 16"><path d="M.5 3.5H5L6.5 5H15.5V15.5H.5Z" fill="#f8dc50" stroke="#b08800"/><path d="M.5 6H15.5" stroke="#fff0a0"/><text x="8" y="14.5" text-anchor="middle" font-family="Liberation Serif,serif" font-weight="bold" font-size="12" fill="#2838a0">A</text></svg>
<div class="t" style="left:47px;top:165px;letter-spacing:-0.075px">Beschriftung</div>
<div class="dh" style="left:17px;top:192px;width:10px"></div>
<div class="pm" style="top:188px"></div>
<svg class="a" style="left:27px;top:183px" width="16" height="16" viewBox="0 0 16 16"><path d="M.8 9L8 1L15.4 7.6L8.6 15.4Z" fill="#f4d030" stroke="#3c2c00" stroke-width="1.1" stroke-linejoin="round"/><path d="M.8 9L8.6 15.4L9.4 13.4L2.4 7.4Z" fill="#fff" stroke="#3c2c00" stroke-width=".8"/><path d="M3.5 7.5L8 2.8L13 7.2" stroke="#fcf0a0" fill="none" stroke-width="1.1"/><path d="M8.6 15.4L15.4 7.6L15.4 9.4L9.4 15.8Z" fill="#a88c10"/></svg>
<div class="t" style="left:47px;top:184px;letter-spacing:-0.089px">Konstruktionsordner</div>
<div class="dh" style="left:17px;top:211px;width:10px"></div>
<div class="pm" style="top:207px"></div>
<svg class="a" style="left:27px;top:202px" width="16" height="16" viewBox="0 0 16 16"><path d="M.5 3.5H5L6.5 5H15.5V15.5H.5Z" fill="#f8dc50" stroke="#b08800"/><path d="M3 15A5 5 0 0 1 13 15Z" fill="#e84810"/><path d="M8 7V9M3.5 9L5 10.5M12.5 9L11 10.5M2 13H3.5M14 13H12.5" stroke="#c03000" stroke-width="1.2"/></svg>
<div class="t" style="left:47px;top:203px;letter-spacing:-0.239px">Beleuchtung und Kameras</div>
<div class="dh" style="left:17px;top:230px;width:10px"></div>
<svg class="a" style="left:27px;top:221px" width="16" height="16" viewBox="0 0 16 16"><path d="M1.5 7.5L8 1.5L14.5 8L8 14.5Z" fill="#fff" stroke="#282828" stroke-width="1.1"/><path d="M.8 1.2L3.6 4.2M12.4 12L15.4 15.2M6.2 5.8L10.2 9.8" stroke="#282828" stroke-width="1.1"/></svg>
<div class="t" style="left:47px;top:222px;letter-spacing:-0.127px">Ebene vorne</div>
<div class="dh" style="left:17px;top:249px;width:10px"></div>
<svg class="a" style="left:27px;top:240px" width="16" height="16" viewBox="0 0 16 16"><path d="M1.5 7.5L8 1.5L14.5 8L8 14.5Z" fill="#fff" stroke="#282828" stroke-width="1.1"/><path d="M.8 1.2L3.6 4.2M12.4 12L15.4 15.2M6.2 5.8L10.2 9.8" stroke="#282828" stroke-width="1.1"/></svg>
<div class="t" style="left:47px;top:241px;letter-spacing:-0.210px">Ebene oben</div>
<div class="dh" style="left:17px;top:268px;width:10px"></div>
<svg class="a" style="left:27px;top:259px" width="16" height="16" viewBox="0 0 16 16"><path d="M1.5 7.5L8 1.5L14.5 8L8 14.5Z" fill="#fff" stroke="#282828" stroke-width="1.1"/><path d="M.8 1.2L3.6 4.2M12.4 12L15.4 15.2M6.2 5.8L10.2 9.8" stroke="#282828" stroke-width="1.1"/></svg>
<div class="t" style="left:47px;top:260px;letter-spacing:-0.125px">Ebene rechts</div>
<div class="dh" style="left:17px;top:287px;width:10px"></div>
<svg class="a" style="left:27px;top:278px" width="16" height="16" viewBox="0 0 16 16"><path d="M5.5 2V13H13.5" stroke="#a41c1c" stroke-width="1.3" fill="none"/><path d="M3.3 4.6L5.5 1L7.7 4.6Z" fill="#a41c1c"/><path d="M11.6 10.8L15.2 13L11.6 15.2Z" fill="#a41c1c"/><path d="M3.5 11.5H7V15H3.5Z" fill="#284890"/><path d="M4 14.5L6.5 12" stroke="#30a040" stroke-width="1.2"/></svg>
<div class="t" style="left:47px;top:279px;letter-spacing:-0.112px">Ursprung</div>
<div class="dh" style="left:17px;top:306px;width:10px"></div>
<div class="pm" style="top:302px"></div>
<svg class="a" style="left:27px;top:297px" width="16" height="16" viewBox="0 0 16 16"><path d="M.7 3.6L5.5 .7L10.8 1.1L11.9 4.4L9.6 6.3L15.3 9.4V12.8L10.4 16L.7 6.6Z" fill="#e4d41c" stroke="#000" stroke-width="1.4" stroke-linejoin="round"/><path d="M1.3 4.8L10 13.2V15L1.3 6.6Z" fill="#fcf670"/><path d="M11 13.2L14.7 10.6V12.4L11 14.9Z" fill="#f6ee58"/><path d="M5.2 3.8Q5.6 2 7.6 2.2Q9.8 2.4 9.3 4.6" fill="none" stroke="#000" stroke-width="1"/><path d="M9.6 6.3L7.4 7.9L10.4 10.8" fill="none" stroke="#000" stroke-width=".9"/><path d="M10.4 13V16M10.4 13L15.3 9.6" stroke="#000" stroke-width=".9"/><path d="M7.8 8.4L10.2 10.6L13.6 8.8L11 7.4Z" fill="#c8a818"/></svg>
<div class="t" style="left:47px;top:298px;letter-spacing:0.133px">(f) Konfigtest_Teil&lt;1&gt; (Standard)</div>
<div class="dh" style="left:17px;top:325px;width:10px"></div>
<div class="pm" style="top:321px"></div>
<svg class="a" style="left:27px;top:316px" width="16" height="16" viewBox="0 0 16 16"><path d="M.7 3.6L5.5 .7L10.8 1.1L11.9 4.4L9.6 6.3L15.3 9.4V12.8L10.4 16L.7 6.6Z" fill="#e4d41c" stroke="#000" stroke-width="1.4" stroke-linejoin="round"/><path d="M1.3 4.8L10 13.2V15L1.3 6.6Z" fill="#fcf670"/><path d="M11 13.2L14.7 10.6V12.4L11 14.9Z" fill="#f6ee58"/><path d="M5.2 3.8Q5.6 2 7.6 2.2Q9.8 2.4 9.3 4.6" fill="none" stroke="#000" stroke-width="1"/><path d="M9.6 6.3L7.4 7.9L10.4 10.8" fill="none" stroke="#000" stroke-width=".9"/><path d="M10.4 13V16M10.4 13L15.3 9.6" stroke="#000" stroke-width=".9"/><path d="M7.8 8.4L10.2 10.6L13.6 8.8L11 7.4Z" fill="#c8a818"/></svg>
<div class="t" style="left:47px;top:317px;letter-spacing:0.103px">Konfigtest_Teil&lt;3&gt; (Standard)</div>
<div class="dh" style="left:17px;top:344px;width:10px"></div>
<div class="pm" style="top:340px"></div>
<svg class="a" style="left:27px;top:335px" width="16" height="16" viewBox="0 0 16 16"><path d="M.7 3.6L5.5 .7L10.8 1.1L11.9 4.4L9.6 6.3L15.3 9.4V12.8L10.4 16L.7 6.6Z" fill="#e4d41c" stroke="#000" stroke-width="1.4" stroke-linejoin="round"/><path d="M1.3 4.8L10 13.2V15L1.3 6.6Z" fill="#fcf670"/><path d="M11 13.2L14.7 10.6V12.4L11 14.9Z" fill="#f6ee58"/><path d="M5.2 3.8Q5.6 2 7.6 2.2Q9.8 2.4 9.3 4.6" fill="none" stroke="#000" stroke-width="1"/><path d="M9.6 6.3L7.4 7.9L10.4 10.8" fill="none" stroke="#000" stroke-width=".9"/><path d="M10.4 13V16M10.4 13L15.3 9.6" stroke="#000" stroke-width=".9"/><path d="M7.8 8.4L10.2 10.6L13.6 8.8L11 7.4Z" fill="#c8a818"/></svg>
<div class="t" style="left:47px;top:336px;letter-spacing:0.103px">Konfigtest_Teil&lt;4&gt; (Standard)</div>
<div class="dh" style="left:17px;top:363px;width:10px"></div>
<div class="pm" style="top:359px"></div>
<svg class="a" style="left:27px;top:354px" width="16" height="16" viewBox="0 0 16 16"><path d="M.7 3.6L5.5 .7L10.8 1.1L11.9 4.4L9.6 6.3L15.3 9.4V12.8L10.4 16L.7 6.6Z" fill="#e4d41c" stroke="#000" stroke-width="1.4" stroke-linejoin="round"/><path d="M1.3 4.8L10 13.2V15L1.3 6.6Z" fill="#fcf670"/><path d="M11 13.2L14.7 10.6V12.4L11 14.9Z" fill="#f6ee58"/><path d="M5.2 3.8Q5.6 2 7.6 2.2Q9.8 2.4 9.3 4.6" fill="none" stroke="#000" stroke-width="1"/><path d="M9.6 6.3L7.4 7.9L10.4 10.8" fill="none" stroke="#000" stroke-width=".9"/><path d="M10.4 13V16M10.4 13L15.3 9.6" stroke="#000" stroke-width=".9"/><path d="M7.8 8.4L10.2 10.6L13.6 8.8L11 7.4Z" fill="#c8a818"/></svg>
<div class="t" style="left:47px;top:355px;letter-spacing:0.103px">Konfigtest_Teil&lt;5&gt; (Standard)</div>
<div class="dh" style="left:17px;top:382px;width:10px"></div>
<div class="pm" style="top:378px"></div>
<svg class="a" style="left:27px;top:373px" width="16" height="16" viewBox="0 0 16 16"><path d="M.7 3.6L5.5 .7L10.8 1.1L11.9 4.4L9.6 6.3L15.3 9.4V12.8L10.4 16L.7 6.6Z" fill="#e4d41c" stroke="#000" stroke-width="1.4" stroke-linejoin="round"/><path d="M1.3 4.8L10 13.2V15L1.3 6.6Z" fill="#fcf670"/><path d="M11 13.2L14.7 10.6V12.4L11 14.9Z" fill="#f6ee58"/><path d="M5.2 3.8Q5.6 2 7.6 2.2Q9.8 2.4 9.3 4.6" fill="none" stroke="#000" stroke-width="1"/><path d="M9.6 6.3L7.4 7.9L10.4 10.8" fill="none" stroke="#000" stroke-width=".9"/><path d="M10.4 13V16M10.4 13L15.3 9.6" stroke="#000" stroke-width=".9"/><path d="M7.8 8.4L10.2 10.6L13.6 8.8L11 7.4Z" fill="#c8a818"/></svg>
<div class="t" style="left:47px;top:374px;letter-spacing:0.075px">Konfigtest_Teil&lt;6&gt; (Konfig1)</div>
<div class="dh" style="left:17px;top:401px;width:10px"></div>
<div class="pm" style="top:397px"></div>
<svg class="a" style="left:27px;top:392px" width="16" height="16" viewBox="0 0 16 16"><path d="M.7 3.6L5.5 .7L10.8 1.1L11.9 4.4L9.6 6.3L15.3 9.4V12.8L10.4 16L.7 6.6Z" fill="#e4d41c" stroke="#000" stroke-width="1.4" stroke-linejoin="round"/><path d="M1.3 4.8L10 13.2V15L1.3 6.6Z" fill="#fcf670"/><path d="M11 13.2L14.7 10.6V12.4L11 14.9Z" fill="#f6ee58"/><path d="M5.2 3.8Q5.6 2 7.6 2.2Q9.8 2.4 9.3 4.6" fill="none" stroke="#000" stroke-width="1"/><path d="M9.6 6.3L7.4 7.9L10.4 10.8" fill="none" stroke="#000" stroke-width=".9"/><path d="M10.4 13V16M10.4 13L15.3 9.6" stroke="#000" stroke-width=".9"/><path d="M7.8 8.4L10.2 10.6L13.6 8.8L11 7.4Z" fill="#c8a818"/></svg>
<div class="t" style="left:47px;top:393px;letter-spacing:0.075px">Konfigtest_Teil&lt;7&gt; (Konfig1)</div>
<div class="dh" style="left:17px;top:420px;width:10px"></div>
<div class="pm" style="top:416px"></div>
<svg class="a" style="left:27px;top:411px" width="16" height="16" viewBox="0 0 16 16"><path d="M.7 3.6L5.5 .7L10.8 1.1L11.9 4.4L9.6 6.3L15.3 9.4V12.8L10.4 16L.7 6.6Z" fill="#e4d41c" stroke="#000" stroke-width="1.4" stroke-linejoin="round"/><path d="M1.3 4.8L10 13.2V15L1.3 6.6Z" fill="#fcf670"/><path d="M11 13.2L14.7 10.6V12.4L11 14.9Z" fill="#f6ee58"/><path d="M5.2 3.8Q5.6 2 7.6 2.2Q9.8 2.4 9.3 4.6" fill="none" stroke="#000" stroke-width="1"/><path d="M9.6 6.3L7.4 7.9L10.4 10.8" fill="none" stroke="#000" stroke-width=".9"/><path d="M10.4 13V16M10.4 13L15.3 9.6" stroke="#000" stroke-width=".9"/><path d="M7.8 8.4L10.2 10.6L13.6 8.8L11 7.4Z" fill="#c8a818"/></svg>
<div class="t" style="left:47px;top:412px;letter-spacing:0.075px">Konfigtest_Teil&lt;8&gt; (Konfig1)</div>
<div class="dh" style="left:17px;top:439px;width:10px"></div>
<div class="pm" style="top:435px"></div>
<svg class="a" style="left:27px;top:430px" width="16" height="16" viewBox="0 0 16 16"><path d="M.7 3.6L5.5 .7L10.8 1.1L11.9 4.4L9.6 6.3L15.3 9.4V12.8L10.4 16L.7 6.6Z" fill="#e4d41c" stroke="#000" stroke-width="1.4" stroke-linejoin="round"/><path d="M1.3 4.8L10 13.2V15L1.3 6.6Z" fill="#fcf670"/><path d="M11 13.2L14.7 10.6V12.4L11 14.9Z" fill="#f6ee58"/><path d="M5.2 3.8Q5.6 2 7.6 2.2Q9.8 2.4 9.3 4.6" fill="none" stroke="#000" stroke-width="1"/><path d="M9.6 6.3L7.4 7.9L10.4 10.8" fill="none" stroke="#000" stroke-width=".9"/><path d="M10.4 13V16M10.4 13L15.3 9.6" stroke="#000" stroke-width=".9"/><path d="M7.8 8.4L10.2 10.6L13.6 8.8L11 7.4Z" fill="#c8a818"/></svg>
<div class="t" style="left:47px;top:431px;letter-spacing:0.075px">Konfigtest_Teil&lt;9&gt; (Konfig2)</div>
<div class="dh" style="left:17px;top:458px;width:10px"></div>
<div class="pm" style="top:454px"></div>
<svg class="a" style="left:27px;top:449px" width="16" height="16" viewBox="0 0 16 16"><path d="M.7 3.6L5.5 .7L10.8 1.1L11.9 4.4L9.6 6.3L15.3 9.4V12.8L10.4 16L.7 6.6Z" fill="#e4d41c" stroke="#000" stroke-width="1.4" stroke-linejoin="round"/><path d="M1.3 4.8L10 13.2V15L1.3 6.6Z" fill="#fcf670"/><path d="M11 13.2L14.7 10.6V12.4L11 14.9Z" fill="#f6ee58"/><path d="M5.2 3.8Q5.6 2 7.6 2.2Q9.8 2.4 9.3 4.6" fill="none" stroke="#000" stroke-width="1"/><path d="M9.6 6.3L7.4 7.9L10.4 10.8" fill="none" stroke="#000" stroke-width=".9"/><path d="M10.4 13V16M10.4 13L15.3 9.6" stroke="#000" stroke-width=".9"/><path d="M7.8 8.4L10.2 10.6L13.6 8.8L11 7.4Z" fill="#c8a818"/></svg>
<div class="t" style="left:47px;top:450px;letter-spacing:0.072px">Konfigtest_Teil&lt;10&gt; (Konfig2)</div>
<div class="dh" style="left:17px;top:477px;width:10px"></div>
<div class="pm" style="top:473px"></div>
<svg class="a" style="left:27px;top:468px" width="16" height="16" viewBox="0 0 16 16"><path d="M1 15V4A2.6 2.6 0 0 1 6.2 4V14.2A1.6 1.6 0 0 1 3 14.2V5.5" fill="none" stroke="#202020" stroke-width="1.5"/><path d="M2 13.5V4.5" stroke="#c4c4c4" stroke-width=".9"/><path d="M9.6 15V4A2.6 2.6 0 0 1 14.8 4V14.2A1.6 1.6 0 0 1 11.6 14.2V5.5" fill="none" stroke="#202020" stroke-width="1.5"/><path d="M10.6 13.5V4.5" stroke="#c4c4c4" stroke-width=".9"/></svg>
<div class="t" style="left:47px;top:469px;letter-spacing:-0.062px">Verknüpfungen</div>
<!-- right task pane -->
<div class="a" style="left:1256px;top:136px;width:20px;height:26px;background:#e4e4e8;border-radius:3px 0 0 3px"></div>
<div class="a" style="left:1256px;top:164px;width:20px;height:26px;background:#e4e4e8;border-radius:3px 0 0 3px"></div>
<div class="a" style="left:1256px;top:192px;width:20px;height:27px;background:#fff;border-radius:3px 0 0 3px"></div>
<div class="a" style="left:1276px;top:193px;width:2px;height:25px;background:#f0a020"></div>
<svg class="a" style="left:1257px;top:140px" width="17" height="18" viewBox="0 0 17 18"><path d="M12 2H14.5V7" stroke="#c02818" stroke-width="2.4" fill="none"/><path d="M1 9.5L8.5 2.5L16 9.5" fill="none" stroke="#000" stroke-width="1.4"/><path d="M3 9V16H14V9L8.5 4Z" fill="#f8ec88" stroke="#000" stroke-width="1"/><rect x="6.5" y="10.5" width="3" height="5.5" fill="#e08820"/></svg>
<svg class="a" style="left:1257px;top:167px" width="18" height="20" viewBox="0 0 18 20"><path d="M1 9L4 6L7 9V17L4 19L1 17Z" fill="#28a030" stroke="#003000" stroke-width=".9"/><path d="M6.5 7L9.5 3.5L12.5 7V17L9.5 19L6.5 17Z" fill="#e8cc20" stroke="#403000" stroke-width=".9"/><path d="M12 4L14.5 0.5L17 4V16L14.5 18L12 16Z" fill="#3878d0" stroke="#001848" stroke-width=".9"/></svg>
<svg class="a" style="left:1257px;top:195px" width="18" height="22" viewBox="0 0 18 22"><path d="M.5 3.5H5L6.5 5H13.5V14.5H.5Z" fill="#f8d860" stroke="#c89820"/><path d="M3 6.5H15V16H3Z" fill="#fce890" stroke="#c89820" stroke-width=".8"/><circle cx="8.5" cy="11" r="4" fill="#b8e4fc" stroke="#7098c0" stroke-width="1.3"/><path d="M11.5 14L16 19.5" stroke="#e8a040" stroke-width="2"/></svg>
<svg class="a" style="left:1258px;top:223px" width="16" height="16" viewBox="0 0 16 16"><circle cx="8" cy="8" r="7.5" fill="#fff" stroke="#b8c4dc"/><path d="M7.5 4.5L4 8L7.5 11.5M11.5 4.5L8 8L11.5 11.5" fill="none" stroke="#1c3c94" stroke-width="1.6"/></svg>
<svg class="a" style="left:1258px;top:909px" width="16" height="16" viewBox="0 0 16 16"><circle cx="8" cy="8" r="7.5" fill="#fff" stroke="#b8c4dc"/><path d="M7.5 4.5L4 8L7.5 11.5M11.5 4.5L8 8L11.5 11.5" fill="none" stroke="#1c3c94" stroke-width="1.6"/></svg>
<div class="a" style="left:1263px;top:246px;width:1px;height:656px;background:#fff;box-shadow:1px 0 0 #a0a0a0"></div>
<div class="a" style="left:1267px;top:246px;width:1px;height:656px;background:#fff;box-shadow:1px 0 0 #a0a0a0"></div>
<!-- triad -->
<svg class="a" style="left:270px;top:880px" width="66" height="66" viewBox="270 880 66 66">
<path d="M296 924L294.8 904.5" stroke="#1c6c28" stroke-width="4"/><path d="M290 905.8L294.4 895.8L299.2 905.8Z" fill="#2c9040"/><path d="M294.4 898L295.2 905" stroke="#58b86c" stroke-width="1.2"/>
<path d="M297.5 925.3L314 926.3" stroke="#b81414" stroke-width="3.7"/><path d="M313.4 921.4L322.6 926.6L313.4 931.2Z" fill="#d43434"/><path d="M314.5 925.5H319" stroke="#f49090" stroke-width="1.4"/>
<path d="M296 925.5L288.5 931.5" stroke="#16169a" stroke-width="4.2"/><ellipse cx="286.4" cy="932.6" rx="4.7" ry="3.6" transform="rotate(-25 286.4 932.6)" fill="#2020b4"/>
<text x="293.6" y="893.6" text-anchor="middle" font-family="Liberation Sans,sans-serif" font-size="10" fill="#3a7a40">Y</text>
<text x="325.6" y="930.6" text-anchor="middle" font-family="Liberation Sans,sans-serif" font-size="10" fill="#e03434">X</text>
<text x="279.6" y="940.4" text-anchor="middle" font-family="Liberation Sans,sans-serif" font-size="10" fill="#2a2ad0">Z</text>
</svg>
<svg class="model" width="1280" height="1026" viewBox="0 0 1280 1026" style="position:absolute;left:0;top:0">
<g stroke="#000" stroke-width="1.1" stroke-linejoin="round" fill="none">
<g>
<polygon points="1029.3,517.4 1017.5,403.4 1039.2,387.1 1051.0,501.1" fill="#ffffff"/>
<polygon points="1017.5,403.4 985.4,368.2 1007.1,351.9 1039.2,387.1" fill="#d4d4ed"/>
<polygon points="936.7,425.3 933.9,426.9 955.6,410.6 958.4,409.0" fill="#c4c4c9" stroke="#c4c4c9" stroke-width="0.6"/>
<polygon points="933.9,426.9 931.0,428.1 952.7,411.8 955.6,410.6" fill="#c4c4c9" stroke="#c4c4c9" stroke-width="0.6"/>
<polygon points="931.0,428.1 927.9,428.8 949.6,412.5 952.7,411.8" fill="#c4c4c9" stroke="#c4c4c9" stroke-width="0.6"/>
<polygon points="927.9,428.8 924.6,429.2 946.3,412.9 949.6,412.5" fill="#c4c4c9" stroke="#c4c4c9" stroke-width="0.6"/>
<polygon points="924.6,429.2 921.3,429.1 943.0,412.8 946.3,412.9" fill="#c4c4c9" stroke="#c4c4c9" stroke-width="0.6"/>
<polygon points="921.3,429.1 917.9,428.6 939.6,412.3 943.0,412.8" fill="#c4c4c9" stroke="#c4c4c9" stroke-width="0.6"/>
<polygon points="917.9,428.6 914.5,427.7 936.2,411.4 939.6,412.3" fill="#c4c4c9" stroke="#c4c4c9" stroke-width="0.6"/>
<polygon points="914.5,427.7 911.2,426.4 932.9,410.1 936.2,411.4" fill="#c4c4ca" stroke="#c4c4ca" stroke-width="0.6"/>
<polygon points="911.2,426.4 908.0,424.6 929.7,408.3 932.9,410.1" fill="#c6c6cf" stroke="#c6c6cf" stroke-width="0.6"/>
<polygon points="908.0,424.6 904.8,422.5 926.5,406.2 929.7,408.3" fill="#c7c7d3" stroke="#c7c7d3" stroke-width="0.6"/>
<polygon points="904.8,422.5 901.9,420.1 923.6,403.8 926.5,406.2" fill="#c8c8d8" stroke="#c8c8d8" stroke-width="0.6"/>
<polygon points="901.9,420.1 899.1,417.3 920.8,401.0 923.6,403.8" fill="#cbcbdf" stroke="#cbcbdf" stroke-width="0.6"/>
<polygon points="899.1,417.3 896.6,414.3 918.3,398.0 920.8,401.0" fill="#cdcde5" stroke="#cdcde5" stroke-width="0.6"/>
<polygon points="896.6,414.3 894.3,411.0 916.0,394.7 918.3,398.0" fill="#d0d0eb" stroke="#d0d0eb" stroke-width="0.6"/>
<polygon points="894.3,411.0 892.3,407.5 914.0,391.2 916.0,394.7" fill="#d3d3f0" stroke="#d3d3f0" stroke-width="0.6"/>
<polygon points="892.3,407.5 890.7,403.8 912.4,387.5 914.0,391.2" fill="#d7d7f3" stroke="#d7d7f3" stroke-width="0.6"/>
<polygon points="890.7,403.8 889.4,400.1 911.1,383.8 912.4,387.5" fill="#dcdcf6" stroke="#dcdcf6" stroke-width="0.6"/>
<polygon points="889.4,400.1 888.4,396.2 910.1,379.9 911.1,383.8" fill="#e1e1f8" stroke="#e1e1f8" stroke-width="0.6"/>
<polygon points="888.4,396.2 887.8,392.4 909.5,376.1 910.1,379.9" fill="#e6e6fb" stroke="#e6e6fb" stroke-width="0.6"/>
<polygon points="887.8,392.4 887.6,388.6 909.3,372.3 909.5,376.1" fill="#e5e5fb" stroke="#e5e5fb" stroke-width="0.6"/>
<polygon points="887.6,388.6 887.8,384.8 909.5,368.5 909.3,372.3" fill="#dfdff9" stroke="#dfdff9" stroke-width="0.6"/>
<polygon points="887.8,384.8 888.4,381.2 910.1,364.9 909.5,368.5" fill="#d9d9f7" stroke="#d9d9f7" stroke-width="0.6"/>
<polygon points="888.4,381.2 889.3,377.8 911.0,361.5 910.1,364.9" fill="#d3d3f5" stroke="#d3d3f5" stroke-width="0.6"/>
<polygon points="889.3,377.8 890.5,374.6 912.2,358.3 911.0,361.5" fill="#cdcdf2" stroke="#cdcdf2" stroke-width="0.6"/>
<polygon points="890.5,374.6 892.2,371.6 913.9,355.3 912.2,358.3" fill="#cbcbf1" stroke="#cbcbf1" stroke-width="0.6"/>
<polygon points="892.2,371.6 894.1,369.0 915.8,352.7 913.9,355.3" fill="#c9c9f0" stroke="#c9c9f0" stroke-width="0.6"/>
<polygon points="894.1,369.0 938.1,316.2 959.8,299.9 915.8,352.7" fill="#d4d4ed"/>
<polygon points="938.1,316.2 906.0,280.9 927.7,264.6 959.8,299.9" fill="#d4d4ed"/>
<polygon points="906.0,280.9 806.3,272.4 828.0,256.1 927.7,264.6" fill="#bdbdc2"/>
<polyline points="958.4,409.0 955.6,410.6 952.7,411.8 949.6,412.5 946.3,412.9 943.0,412.8 939.6,412.3 936.2,411.4 932.9,410.1 929.7,408.3 926.5,406.2 923.6,403.8 920.8,401.0 918.3,398.0 916.0,394.7 914.0,391.2 912.4,387.5 911.1,383.8 910.1,379.9 909.5,376.1 909.3,372.3 909.5,368.5 910.1,364.9 911.0,361.5 912.2,358.3 913.9,355.3 915.8,352.7"/>
<polygon points="829.8,500.4 1029.3,517.4 1017.5,403.4 985.4,368.2 941.4,420.9 939.2,423.3 936.7,425.3 933.9,426.9 931.0,428.1 927.9,428.8 924.6,429.2 921.3,429.1 917.9,428.6 914.5,427.7 911.2,426.4 908.0,424.6 904.8,422.5 901.9,420.1 899.1,417.3 896.6,414.3 894.3,411.0 892.3,407.5 890.7,403.8 889.4,400.1 888.4,396.2 887.8,392.4 887.6,388.6 887.8,384.8 888.4,381.2 889.3,377.8 890.5,374.6 892.2,371.6 894.1,369.0 938.1,316.2 906.0,280.9 806.3,272.4" fill="#c7c7cb"/>
</g>
<g class="lb">
<text transform="matrix(1.9950 0.1700 0.2350 2.2800 831.6 495.6)" font-size="9.6" text-anchor="start" letter-spacing="0.5">front</text>
<text transform="matrix(1.9950 0.1700 0.2350 2.2800 1024.4 512.1)" font-size="9.6" text-anchor="end" letter-spacing="0">x</text>
<text transform="matrix(1.9950 0.1700 0.2350 2.2800 812.9 289.3)" font-size="9.6" text-anchor="start" letter-spacing="0">y</text>
</g>
<g>
<polygon points="984.3,549.5 972.5,435.5 994.2,419.2 1006.0,533.2" fill="#ffffff"/>
<polygon points="972.5,435.5 940.4,400.2 962.1,383.9 994.2,419.2" fill="#d4d4ed"/>
<polygon points="891.7,457.3 888.9,458.9 910.6,442.6 913.4,441.0" fill="#c4c4c9" stroke="#c4c4c9" stroke-width="0.6"/>
<polygon points="888.9,458.9 886.0,460.1 907.7,443.8 910.6,442.6" fill="#c4c4c9" stroke="#c4c4c9" stroke-width="0.6"/>
<polygon points="886.0,460.1 882.9,460.9 904.6,444.6 907.7,443.8" fill="#c4c4c9" stroke="#c4c4c9" stroke-width="0.6"/>
<polygon points="882.9,460.9 879.6,461.3 901.3,445.0 904.6,444.6" fill="#c4c4c9" stroke="#c4c4c9" stroke-width="0.6"/>
<polygon points="879.6,461.3 876.3,461.2 898.0,444.9 901.3,445.0" fill="#c4c4c9" stroke="#c4c4c9" stroke-width="0.6"/>
<polygon points="876.3,461.2 872.9,460.7 894.6,444.4 898.0,444.9" fill="#c4c4c9" stroke="#c4c4c9" stroke-width="0.6"/>
<polygon points="872.9,460.7 869.6,459.8 891.3,443.5 894.6,444.4" fill="#c4c4c9" stroke="#c4c4c9" stroke-width="0.6"/>
<polygon points="869.6,459.8 866.2,458.4 887.9,442.1 891.3,443.5" fill="#c4c4ca" stroke="#c4c4ca" stroke-width="0.6"/>
<polygon points="866.2,458.4 863.0,456.7 884.7,440.4 887.9,442.1" fill="#c6c6cf" stroke="#c6c6cf" stroke-width="0.6"/>
<polygon points="863.0,456.7 859.9,454.6 881.6,438.3 884.7,440.4" fill="#c7c7d3" stroke="#c7c7d3" stroke-width="0.6"/>
<polygon points="859.9,454.6 856.9,452.2 878.6,435.9 881.6,438.3" fill="#c8c8d8" stroke="#c8c8d8" stroke-width="0.6"/>
<polygon points="856.9,452.2 854.1,449.4 875.8,433.1 878.6,435.9" fill="#cbcbdf" stroke="#cbcbdf" stroke-width="0.6"/>
<polygon points="854.1,449.4 851.6,446.3 873.3,430.0 875.8,433.1" fill="#cdcde5" stroke="#cdcde5" stroke-width="0.6"/>
<polygon points="851.6,446.3 849.3,443.0 871.0,426.7 873.3,430.0" fill="#d0d0eb" stroke="#d0d0eb" stroke-width="0.6"/>
<polygon points="849.3,443.0 847.4,439.6 869.1,423.3 871.0,426.7" fill="#d3d3f0" stroke="#d3d3f0" stroke-width="0.6"/>
<polygon points="847.4,439.6 845.7,435.9 867.4,419.6 869.1,423.3" fill="#d7d7f3" stroke="#d7d7f3" stroke-width="0.6"/>
<polygon points="845.7,435.9 844.4,432.1 866.1,415.8 867.4,419.6" fill="#dcdcf6" stroke="#dcdcf6" stroke-width="0.6"/>
<polygon points="844.4,432.1 843.4,428.3 865.1,412.0 866.1,415.8" fill="#e1e1f8" stroke="#e1e1f8" stroke-width="0.6"/>
<polygon points="843.4,428.3 842.9,424.5 864.6,408.2 865.1,412.0" fill="#e6e6fb" stroke="#e6e6fb" stroke-width="0.6"/>
<polygon points="842.9,424.5 842.7,420.6 864.4,404.3 864.6,408.2" fill="#e5e5fb" stroke="#e5e5fb" stroke-width="0.6"/>
<polygon points="842.7,420.6 842.8,416.9 864.5,400.6 864.4,404.3" fill="#dfdff9" stroke="#dfdff9" stroke-width="0.6"/>
<polygon points="842.8,416.9 843.4,413.3 865.1,397.0 864.5,400.6" fill="#d9d9f7" stroke="#d9d9f7" stroke-width="0.6"/>
<polygon points="843.4,413.3 844.3,409.9 866.0,393.6 865.1,397.0" fill="#d3d3f5" stroke="#d3d3f5" stroke-width="0.6"/>
<polygon points="844.3,409.9 845.6,406.7 867.3,390.4 866.0,393.6" fill="#cdcdf2" stroke="#cdcdf2" stroke-width="0.6"/>
<polygon points="845.6,406.7 847.2,403.7 868.9,387.4 867.3,390.4" fill="#cbcbf1" stroke="#cbcbf1" stroke-width="0.6"/>
<polygon points="847.2,403.7 849.1,401.0 870.8,384.7 868.9,387.4" fill="#c9c9f0" stroke="#c9c9f0" stroke-width="0.6"/>
<polygon points="849.1,401.0 893.1,348.3 914.8,332.0 870.8,384.7" fill="#d4d4ed"/>
<polygon points="893.1,348.3 861.0,313.0 882.7,296.7 914.8,332.0" fill="#d4d4ed"/>
<polygon points="861.0,313.0 761.3,304.5 783.0,288.2 882.7,296.7" fill="#bdbdc2"/>
<polyline points="913.4,441.0 910.6,442.6 907.7,443.8 904.6,444.6 901.3,445.0 898.0,444.9 894.6,444.4 891.3,443.5 887.9,442.1 884.7,440.4 881.6,438.3 878.6,435.9 875.8,433.1 873.3,430.0 871.0,426.7 869.1,423.3 867.4,419.6 866.1,415.8 865.1,412.0 864.6,408.2 864.4,404.3 864.5,400.6 865.1,397.0 866.0,393.6 867.3,390.4 868.9,387.4 870.8,384.7"/>
<polygon points="784.8,532.5 984.3,549.5 972.5,435.5 940.4,400.2 896.4,453.0 894.2,455.3 891.7,457.3 888.9,458.9 886.0,460.1 882.9,460.9 879.6,461.3 876.3,461.2 872.9,460.7 869.6,459.8 866.2,458.4 863.0,456.7 859.9,454.6 856.9,452.2 854.1,449.4 851.6,446.3 849.3,443.0 847.4,439.6 845.7,435.9 844.4,432.1 843.4,428.3 842.9,424.5 842.7,420.6 842.8,416.9 843.4,413.3 844.3,409.9 845.6,406.7 847.2,403.7 849.1,401.0 893.1,348.3 861.0,313.0 761.3,304.5" fill="#c7c7cb"/>
</g>
<g class="lb">
<text transform="matrix(1.9950 0.1700 0.2350 2.2800 786.7 527.7)" font-size="9.6" text-anchor="start" letter-spacing="0.5">front</text>
<text transform="matrix(1.9950 0.1700 0.2350 2.2800 979.4 544.1)" font-size="9.6" text-anchor="end" letter-spacing="0">x</text>
<text transform="matrix(1.9950 0.1700 0.2350 2.2800 768.0 321.4)" font-size="9.6" text-anchor="start" letter-spacing="0">y</text>
</g>
<g>
<polygon points="939.3,581.6 927.6,467.6 949.3,451.3 961.0,565.3" fill="#ffffff"/>
<polygon points="927.6,467.6 816.1,345.1 837.8,328.8 949.3,451.3" fill="#d4d4ed"/>
<polygon points="816.1,345.1 716.3,336.6 738.0,320.3 837.8,328.8" fill="#bdbdc2"/>
<polygon points="739.8,564.6 939.3,581.6 927.6,467.6 816.1,345.1 716.3,336.6" fill="#c7c7cb"/>
</g>
<g class="lb">
<text transform="matrix(1.9950 0.1700 0.2350 2.2800 741.7 559.8)" font-size="9.6" text-anchor="start" letter-spacing="0.5">front</text>
<text transform="matrix(1.9950 0.1700 0.2350 2.2800 934.4 576.2)" font-size="9.6" text-anchor="end" letter-spacing="0">x</text>
<text transform="matrix(1.9950 0.1700 0.2350 2.2800 723.0 353.4)" font-size="9.6" text-anchor="start" letter-spacing="0">y</text>
</g>
<g>
<polygon points="894.4,613.6 882.6,499.6 904.3,483.3 916.1,597.4" fill="#ffffff"/>
<polygon points="882.6,499.6 771.1,377.1 792.8,360.8 904.3,483.3" fill="#d4d4ed"/>
<polygon points="771.1,377.1 671.4,368.6 693.1,352.3 792.8,360.8" fill="#bdbdc2"/>
<polygon points="694.9,596.6 894.4,613.6 882.6,499.6 771.1,377.1 671.4,368.6" fill="#c7c7cb"/>
</g>
<g class="lb">
<text transform="matrix(1.9950 0.1700 0.2350 2.2800 696.7 591.8)" font-size="9.6" text-anchor="start" letter-spacing="0.5">front</text>
<text transform="matrix(1.9950 0.1700 0.2350 2.2800 889.4 608.3)" font-size="9.6" text-anchor="end" letter-spacing="0">x</text>
<text transform="matrix(1.9950 0.1700 0.2350 2.2800 678.0 385.5)" font-size="9.6" text-anchor="start" letter-spacing="0">y</text>
</g>
<g>
<polygon points="849.4,645.7 837.6,531.7 859.3,515.4 871.1,629.4" fill="#ffffff"/>
<polygon points="837.6,531.7 726.1,409.2 747.8,392.9 859.3,515.4" fill="#d4d4ed"/>
<polygon points="726.1,409.2 626.4,400.7 648.1,384.4 747.8,392.9" fill="#bdbdc2"/>
<polygon points="649.9,628.7 849.4,645.7 837.6,531.7 726.1,409.2 626.4,400.7" fill="#c7c7cb"/>
</g>
<g class="lb">
<text transform="matrix(1.9950 0.1700 0.2350 2.2800 651.8 623.9)" font-size="9.6" text-anchor="start" letter-spacing="0.5">front</text>
<text transform="matrix(1.9950 0.1700 0.2350 2.2800 844.5 640.3)" font-size="9.6" text-anchor="end" letter-spacing="0">x</text>
<text transform="matrix(1.9950 0.1700 0.2350 2.2800 633.1 417.6)" font-size="9.6" text-anchor="start" letter-spacing="0">y</text>
</g>
<g>
<polygon points="804.4,677.8 780.9,449.8 802.6,433.5 826.1,661.5" fill="#ffffff"/>
<polygon points="780.9,449.8 681.2,441.3 702.9,425.0 802.6,433.5" fill="#bdbdc2"/>
<polygon points="804.4,677.8 780.9,449.8 681.2,441.3 593.2,546.8 604.9,660.8" fill="#c7c7cb"/>
</g>
<g class="lb">
<text transform="matrix(-0.2350 -2.2800 1.9950 0.1700 799.7 674.7)" font-size="9.6" text-anchor="start" letter-spacing="0.5">front</text>
<text transform="matrix(-0.2350 -2.2800 1.9950 0.1700 777.0 454.4)" font-size="9.6" text-anchor="end" letter-spacing="0">x</text>
<text transform="matrix(-0.2350 -2.2800 1.9950 0.1700 618.7 656.3)" font-size="9.6" text-anchor="start" letter-spacing="0">y</text>
</g>
<g>
<polygon points="735.9,481.9 536.4,464.9 558.1,448.6 757.6,465.6" fill="#bdbdc2"/>
<polygon points="759.4,709.9 735.9,481.9 757.6,465.6 781.1,693.6" fill="#ffffff"/>
<polygon points="735.9,481.9 536.4,464.9 548.2,578.9 659.7,701.4 759.4,709.9" fill="#c7c7cb"/>
</g>
<g class="lb">
<text transform="matrix(-1.9950 -0.1700 -0.2350 -2.2800 734.1 486.7)" font-size="9.6" text-anchor="start" letter-spacing="0.5">front</text>
<text transform="matrix(-1.9950 -0.1700 -0.2350 -2.2800 541.3 470.2)" font-size="9.6" text-anchor="end" letter-spacing="0">x</text>
<text transform="matrix(-1.9950 -0.1700 -0.2350 -2.2800 752.8 693.0)" font-size="9.6" text-anchor="start" letter-spacing="0">y</text>
</g>
<g>
<polygon points="614.7,733.4 702.7,627.9 724.4,611.6 636.4,717.1" fill="#d4d4ed"/>
<polygon points="702.7,627.9 691.0,513.9 712.7,497.6 724.4,611.6" fill="#ffffff"/>
<polygon points="691.0,513.9 491.5,496.9 513.2,480.6 712.7,497.6" fill="#bdbdc2"/>
<polygon points="491.5,496.9 515.0,724.9 614.7,733.4 702.7,627.9 691.0,513.9" fill="#c7c7cb"/>
</g>
<g class="lb">
<text transform="matrix(0.2350 2.2800 -1.9950 -0.1700 496.1 500.0)" font-size="9.6" text-anchor="start" letter-spacing="0.5">front</text>
<text transform="matrix(0.2350 2.2800 -1.9950 -0.1700 518.8 720.3)" font-size="9.6" text-anchor="end" letter-spacing="0">x</text>
<text transform="matrix(0.2350 2.2800 -1.9950 -0.1700 677.2 518.4)" font-size="9.6" text-anchor="start" letter-spacing="0">y</text>
</g>
<g>
<polygon points="669.5,774.0 657.8,660.0 679.5,643.7 691.2,757.7" fill="#ffffff"/>
<polygon points="657.8,660.0 546.2,537.5 568.0,521.2 679.5,643.7" fill="#d4d4ed"/>
<polygon points="546.2,537.5 446.5,529.0 468.2,512.7 568.0,521.2" fill="#bdbdc2"/>
<polygon points="470.0,757.0 669.5,774.0 657.8,660.0 546.2,537.5 446.5,529.0" fill="#c7c7cb"/>
</g>
<g class="lb">
<text transform="matrix(1.9950 0.1700 0.2350 2.2800 471.9 752.2)" font-size="9.6" text-anchor="start" letter-spacing="0.5">front</text>
<text transform="matrix(1.9950 0.1700 0.2350 2.2800 664.6 768.6)" font-size="9.6" text-anchor="end" letter-spacing="0">x</text>
<text transform="matrix(1.9950 0.1700 0.2350 2.2800 453.2 545.8)" font-size="9.6" text-anchor="start" letter-spacing="0">y</text>
</g>
</g></svg></body></html>
